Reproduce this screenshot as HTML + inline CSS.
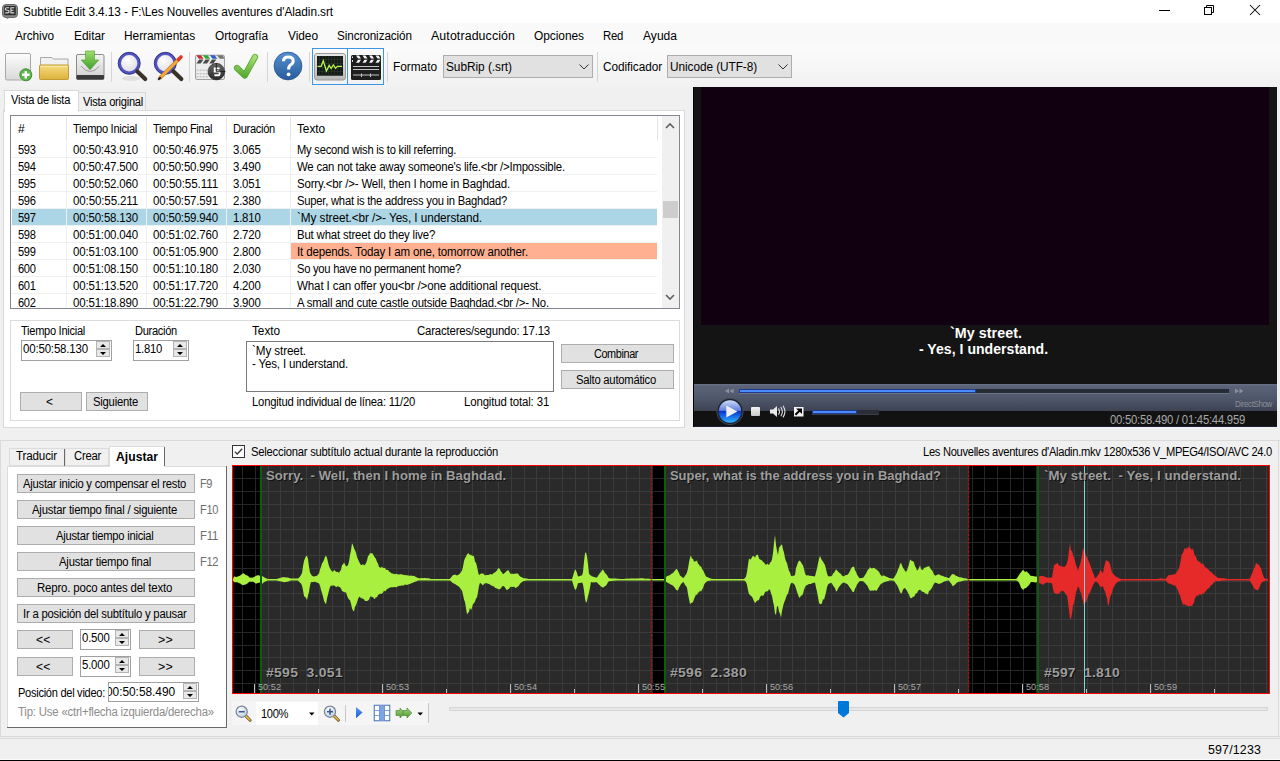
<!DOCTYPE html>
<html><head><meta charset="utf-8"><style>
html,body{margin:0;padding:0;}
body{width:1280px;height:761px;position:relative;overflow:hidden;background:#f0f0f0;font-family:"Liberation Sans",sans-serif;}
.a{position:absolute;}
.t{white-space:pre;}
svg{position:absolute;overflow:visible;}
</style></head><body>
<div class="a" style="left:0px;top:0px;width:1280px;height:23px;background:#ffffff;"></div>
<svg style="left:0px;top:0px" width="22" height="22" viewBox="0 0 22 22"><rect x="2.5" y="4.5" width="15" height="13" rx="3.5" fill="#8a8a8a" stroke="#6a6a6a" stroke-width="1"/><rect x="4.2" y="6" width="11.6" height="9.2" rx="1" fill="#2c2c2c"/><path d="M7 18 L6.5 19.5 L9 18Z" fill="#8a8a8a"/><path d="M9.2 7.8H6.6Q5.4 7.8 5.4 9.1Q5.4 10.3 6.6 10.3H7.9Q9.1 10.3 9.1 11.6Q9.1 12.9 7.9 12.9H5.3" fill="none" stroke="#dedede" stroke-width="1.1"/><path d="M14.3 7.8H10.9V12.9H14.3M10.9 10.3H13.6" fill="none" stroke="#dedede" stroke-width="1.1"/></svg>
<div class="a t" style="left:23.0px;top:6.0px;font-size:12px;line-height:12px;color:#000;letter-spacing:-0.06px;transform:scaleX(0.9830);transform-origin:0 0;">Subtitle Edit 3.4.13 - F:\Les Nouvelles aventures d&#x27;Aladin.srt</div>
<div class="a" style="left:1159px;top:10px;width:11px;height:1px;background:#000;"></div>
<svg style="left:1204px;top:5px" width="10" height="10" viewBox="0 0 10 10"><path d="M2.5 2 V0.5 H9.5 V7.5 H8" fill="none" stroke="#000"/><rect x="0.5" y="2.5" width="7" height="7" fill="none" stroke="#000"/></svg>
<svg style="left:1250px;top:5px" width="10" height="10" viewBox="0 0 10 10"><path d="M0 0 L10 10 M10 0 L0 10" stroke="#000" stroke-width="1.05"/></svg>
<div class="a" style="left:0px;top:23px;width:1280px;height:24px;background:#f9f9f9;"></div>
<div class="a" style="left:1279px;top:47px;width:1px;height:38px;background:#a8a8a8;"></div>
<div class="a t" style="left:15.0px;top:30.0px;font-size:12px;line-height:12px;color:#000;letter-spacing:-0.06px;transform:scaleX(0.9848);transform-origin:0 0;">Archivo</div>
<div class="a t" style="left:74.0px;top:30.0px;font-size:12px;line-height:12px;color:#000;letter-spacing:-0.02px;transform:scaleX(0.9934);transform-origin:0 0;">Editar</div>
<div class="a t" style="left:124.0px;top:30.0px;font-size:12px;line-height:12px;color:#000;letter-spacing:-0.03px;transform:scaleX(0.9914);transform-origin:0 0;">Herramientas</div>
<div class="a t" style="left:215.0px;top:30.0px;font-size:12px;line-height:12px;color:#000;letter-spacing:-0.04px;transform:scaleX(0.9889);transform-origin:0 0;">Ortografía</div>
<div class="a t" style="left:288.0px;top:30.0px;font-size:12px;line-height:12px;color:#000;letter-spacing:-0.04px;transform:scaleX(0.9908);transform-origin:0 0;">Video</div>
<div class="a t" style="left:337.0px;top:30.0px;font-size:12px;line-height:12px;color:#000;letter-spacing:-0.09px;transform:scaleX(0.9766);transform-origin:0 0;">Sincronización</div>
<div class="a t" style="left:431.0px;top:30.0px;font-size:12px;line-height:12px;color:#000;letter-spacing:0.11px;transform:scaleX(1.0298);transform-origin:0 0;">Autotraducción</div>
<div class="a t" style="left:534.0px;top:30.0px;font-size:12px;line-height:12px;color:#000;letter-spacing:-0.03px;transform:scaleX(0.9919);transform-origin:0 0;">Opciones</div>
<div class="a t" style="left:603.0px;top:30.0px;font-size:12px;line-height:12px;color:#000;letter-spacing:-0.28px;transform:scaleX(0.9451);transform-origin:0 0;">Red</div>
<div class="a t" style="left:643.0px;top:30.0px;font-size:12px;line-height:12px;color:#000;letter-spacing:0.02px;transform:scaleX(1.0036);transform-origin:0 0;">Ayuda</div>
<div class="a" style="left:0px;top:47px;width:1280px;height:40px;background:linear-gradient(#fbfbfb,#f1f1f1);"></div>
<div class="a" style="left:111px;top:52px;width:1px;height:30px;background:#d5d5d5;"></div>
<div class="a" style="left:189px;top:52px;width:1px;height:30px;background:#d5d5d5;"></div>
<div class="a" style="left:267px;top:52px;width:1px;height:30px;background:#d5d5d5;"></div>
<div class="a" style="left:309px;top:52px;width:1px;height:30px;background:#d5d5d5;"></div>
<div class="a" style="left:387px;top:52px;width:1px;height:30px;background:#d5d5d5;"></div>
<div class="a" style="left:597px;top:52px;width:1px;height:30px;background:#d5d5d5;"></div>
<div class="a t" style="left:393.0px;top:61.0px;font-size:12px;line-height:12px;color:#000;letter-spacing:-0.04px;transform:scaleX(0.9910);transform-origin:0 0;">Formato</div>
<div class="a" style="left:443px;top:55px;width:150px;height:23px;background:#e1e1e1;border:1px solid #adadad;box-sizing:border-box;"></div>
<div class="a t" style="left:446.0px;top:61.0px;font-size:12px;line-height:12px;color:#000;letter-spacing:-0.04px;transform:scaleX(0.9880);transform-origin:0 0;">SubRip (.srt)</div>
<div class="a t" style="left:603.0px;top:61.0px;font-size:12px;line-height:12px;color:#000;letter-spacing:-0.06px;transform:scaleX(0.9832);transform-origin:0 0;">Codificador</div>
<div class="a" style="left:667px;top:55px;width:125px;height:23px;background:#e1e1e1;border:1px solid #adadad;box-sizing:border-box;"></div>
<div class="a t" style="left:670.0px;top:61.0px;font-size:12px;line-height:12px;color:#000;letter-spacing:-0.06px;transform:scaleX(0.9842);transform-origin:0 0;">Unicode (UTF-8)</div>
<svg style="left:579px;top:64px" width="10" height="6" viewBox="0 0 10 6"><path d="M0.5 0.5 L5 5 L9.5 0.5" fill="none" stroke="#333" stroke-width="1"/></svg>
<svg style="left:778px;top:64px" width="10" height="6" viewBox="0 0 10 6"><path d="M0.5 0.5 L5 5 L9.5 0.5" fill="none" stroke="#333" stroke-width="1"/></svg>
<div class="a" style="left:312px;top:48px;width:36px;height:37px;background:transparent;border:1px solid #3d95e6;box-sizing:border-box;"></div>
<div class="a" style="left:347px;top:48px;width:37px;height:37px;background:transparent;border:1px solid #3d95e6;box-sizing:border-box;"></div>
<div class="a" style="left:3px;top:110px;width:682px;height:318px;background:#ffffff;border:1px solid #d9d9d9;box-sizing:border-box;"></div>
<div class="a" style="left:78px;top:92px;width:68px;height:19px;background:#f0f0f0;border:1px solid #d9d9d9;box-sizing:border-box;"></div>
<div class="a" style="left:4px;top:90px;width:75px;height:22px;background:#ffffff;border:1px solid #d9d9d9;box-sizing:border-box;border-bottom:none;"></div>
<div class="a t" style="left:11.0px;top:94.0px;font-size:12px;line-height:12px;color:#000;letter-spacing:-0.27px;transform:scaleX(0.9221);transform-origin:0 0;">Vista de lista</div>
<div class="a t" style="left:83.0px;top:96.0px;font-size:12px;line-height:12px;color:#000;letter-spacing:-0.26px;transform:scaleX(0.9257);transform-origin:0 0;">Vista original</div>
<div class="a" style="left:10px;top:115px;width:670px;height:194px;background:#ffffff;border:1px solid #828790;box-sizing:border-box;"></div>
<div class="a" style="left:66px;top:117px;width:1px;height:24px;background:#e5e5e5;"></div>
<div class="a" style="left:146px;top:117px;width:1px;height:24px;background:#e5e5e5;"></div>
<div class="a" style="left:226px;top:117px;width:1px;height:24px;background:#e5e5e5;"></div>
<div class="a" style="left:290px;top:117px;width:1px;height:24px;background:#e5e5e5;"></div>
<div class="a" style="left:657px;top:117px;width:1px;height:24px;background:#e5e5e5;"></div>
<div class="a" style="left:11px;top:140px;width:646px;height:1px;background:#ffffff;"></div>
<div class="a t" style="left:18.0px;top:123.0px;font-size:12px;line-height:12px;color:#000;">#</div>
<div class="a t" style="left:73.0px;top:123.0px;font-size:12px;line-height:12px;color:#000;letter-spacing:-0.30px;transform:scaleX(0.9218);transform-origin:0 0;">Tiempo Inicial</div>
<div class="a t" style="left:153.0px;top:123.0px;font-size:12px;line-height:12px;color:#000;letter-spacing:-0.36px;transform:scaleX(0.9136);transform-origin:0 0;">Tiempo Final</div>
<div class="a t" style="left:233.0px;top:123.0px;font-size:12px;line-height:12px;color:#000;letter-spacing:-0.33px;transform:scaleX(0.9247);transform-origin:0 0;">Duración</div>
<div class="a t" style="left:297.0px;top:123.0px;font-size:12px;line-height:12px;color:#000;letter-spacing:-0.05px;transform:scaleX(0.9859);transform-origin:0 0;">Texto</div>
<div class="a" style="left:11px;top:141px;width:651px;height:167px;overflow:hidden">
<div class="a" style="left:0px;top:16px;width:646px;height:1px;background:#f0f0f0"></div>
<div class="a" style="left:55px;top:0px;width:1px;height:16px;background:#f0f0f0"></div>
<div class="a" style="left:135px;top:0px;width:1px;height:16px;background:#f0f0f0"></div>
<div class="a" style="left:215px;top:0px;width:1px;height:16px;background:#f0f0f0"></div>
<div class="a" style="left:279px;top:0px;width:1px;height:16px;background:#f0f0f0"></div>
<div class="a" style="left:0px;top:33px;width:646px;height:1px;background:#f0f0f0"></div>
<div class="a" style="left:55px;top:17px;width:1px;height:16px;background:#f0f0f0"></div>
<div class="a" style="left:135px;top:17px;width:1px;height:16px;background:#f0f0f0"></div>
<div class="a" style="left:215px;top:17px;width:1px;height:16px;background:#f0f0f0"></div>
<div class="a" style="left:279px;top:17px;width:1px;height:16px;background:#f0f0f0"></div>
<div class="a" style="left:0px;top:50px;width:646px;height:1px;background:#f0f0f0"></div>
<div class="a" style="left:55px;top:34px;width:1px;height:16px;background:#f0f0f0"></div>
<div class="a" style="left:135px;top:34px;width:1px;height:16px;background:#f0f0f0"></div>
<div class="a" style="left:215px;top:34px;width:1px;height:16px;background:#f0f0f0"></div>
<div class="a" style="left:279px;top:34px;width:1px;height:16px;background:#f0f0f0"></div>
<div class="a" style="left:0px;top:67px;width:646px;height:1px;background:#f0f0f0"></div>
<div class="a" style="left:55px;top:51px;width:1px;height:16px;background:#f0f0f0"></div>
<div class="a" style="left:135px;top:51px;width:1px;height:16px;background:#f0f0f0"></div>
<div class="a" style="left:215px;top:51px;width:1px;height:16px;background:#f0f0f0"></div>
<div class="a" style="left:279px;top:51px;width:1px;height:16px;background:#f0f0f0"></div>
<div class="a" style="left:1px;top:68px;width:645px;height:16px;background:#acd6e5"></div>
<div class="a" style="left:55px;top:68px;width:1px;height:16px;background:#ffffff"></div>
<div class="a" style="left:0px;top:84px;width:646px;height:1px;background:#f0f0f0"></div>
<div class="a" style="left:55px;top:68px;width:1px;height:16px;background:#f0f0f0"></div>
<div class="a" style="left:135px;top:68px;width:1px;height:16px;background:#f0f0f0"></div>
<div class="a" style="left:215px;top:68px;width:1px;height:16px;background:#f0f0f0"></div>
<div class="a" style="left:279px;top:68px;width:1px;height:16px;background:#f0f0f0"></div>
<div class="a" style="left:0px;top:101px;width:646px;height:1px;background:#f0f0f0"></div>
<div class="a" style="left:55px;top:85px;width:1px;height:16px;background:#f0f0f0"></div>
<div class="a" style="left:135px;top:85px;width:1px;height:16px;background:#f0f0f0"></div>
<div class="a" style="left:215px;top:85px;width:1px;height:16px;background:#f0f0f0"></div>
<div class="a" style="left:279px;top:85px;width:1px;height:16px;background:#f0f0f0"></div>
<div class="a" style="left:280px;top:102px;width:366px;height:16px;background:#ffb091"></div>
<div class="a" style="left:0px;top:118px;width:646px;height:1px;background:#f0f0f0"></div>
<div class="a" style="left:55px;top:102px;width:1px;height:16px;background:#f0f0f0"></div>
<div class="a" style="left:135px;top:102px;width:1px;height:16px;background:#f0f0f0"></div>
<div class="a" style="left:215px;top:102px;width:1px;height:16px;background:#f0f0f0"></div>
<div class="a" style="left:279px;top:102px;width:1px;height:16px;background:#f0f0f0"></div>
<div class="a" style="left:0px;top:135px;width:646px;height:1px;background:#f0f0f0"></div>
<div class="a" style="left:55px;top:119px;width:1px;height:16px;background:#f0f0f0"></div>
<div class="a" style="left:135px;top:119px;width:1px;height:16px;background:#f0f0f0"></div>
<div class="a" style="left:215px;top:119px;width:1px;height:16px;background:#f0f0f0"></div>
<div class="a" style="left:279px;top:119px;width:1px;height:16px;background:#f0f0f0"></div>
<div class="a" style="left:0px;top:152px;width:646px;height:1px;background:#f0f0f0"></div>
<div class="a" style="left:55px;top:136px;width:1px;height:16px;background:#f0f0f0"></div>
<div class="a" style="left:135px;top:136px;width:1px;height:16px;background:#f0f0f0"></div>
<div class="a" style="left:215px;top:136px;width:1px;height:16px;background:#f0f0f0"></div>
<div class="a" style="left:279px;top:136px;width:1px;height:16px;background:#f0f0f0"></div>
<div class="a" style="left:0px;top:169px;width:646px;height:1px;background:#f0f0f0"></div>
<div class="a" style="left:55px;top:153px;width:1px;height:16px;background:#f0f0f0"></div>
<div class="a" style="left:135px;top:153px;width:1px;height:16px;background:#f0f0f0"></div>
<div class="a" style="left:215px;top:153px;width:1px;height:16px;background:#f0f0f0"></div>
<div class="a" style="left:279px;top:153px;width:1px;height:16px;background:#f0f0f0"></div>
</div>
<div class="a t" style="left:18.0px;top:144.0px;font-size:12px;line-height:12px;color:#000;letter-spacing:-0.36px;transform:scaleX(0.9246);transform-origin:0 0;">593</div>
<div class="a t" style="left:73.0px;top:144.0px;font-size:12px;line-height:12px;color:#000;letter-spacing:-0.18px;transform:scaleX(0.9569);transform-origin:0 0;">00:50:43.910</div>
<div class="a t" style="left:153.0px;top:144.0px;font-size:12px;line-height:12px;color:#000;letter-spacing:-0.18px;transform:scaleX(0.9569);transform-origin:0 0;">00:50:46.975</div>
<div class="a t" style="left:233.0px;top:144.0px;font-size:12px;line-height:12px;color:#000;letter-spacing:-0.21px;transform:scaleX(0.9497);transform-origin:0 0;">3.065</div>
<div class="a t" style="left:297.0px;top:144.0px;font-size:12px;line-height:12px;color:#000;letter-spacing:-0.24px;transform:scaleX(0.9318);transform-origin:0 0;">My second wish is to kill referring.</div>
<div class="a t" style="left:18.0px;top:161.0px;font-size:12px;line-height:12px;color:#000;letter-spacing:-0.36px;transform:scaleX(0.9246);transform-origin:0 0;">594</div>
<div class="a t" style="left:73.0px;top:161.0px;font-size:12px;line-height:12px;color:#000;letter-spacing:-0.18px;transform:scaleX(0.9569);transform-origin:0 0;">00:50:47.500</div>
<div class="a t" style="left:153.0px;top:161.0px;font-size:12px;line-height:12px;color:#000;letter-spacing:-0.18px;transform:scaleX(0.9569);transform-origin:0 0;">00:50:50.990</div>
<div class="a t" style="left:233.0px;top:161.0px;font-size:12px;line-height:12px;color:#000;letter-spacing:-0.21px;transform:scaleX(0.9497);transform-origin:0 0;">3.490</div>
<div class="a t" style="left:297.0px;top:161.0px;font-size:12px;line-height:12px;color:#000;letter-spacing:-0.20px;transform:scaleX(0.9491);transform-origin:0 0;">We can not take away someone&#x27;s life.&lt;br /&gt;Impossible.</div>
<div class="a t" style="left:18.0px;top:178.0px;font-size:12px;line-height:12px;color:#000;letter-spacing:-0.36px;transform:scaleX(0.9246);transform-origin:0 0;">595</div>
<div class="a t" style="left:73.0px;top:178.0px;font-size:12px;line-height:12px;color:#000;letter-spacing:-0.18px;transform:scaleX(0.9569);transform-origin:0 0;">00:50:52.060</div>
<div class="a t" style="left:153.0px;top:178.0px;font-size:12px;line-height:12px;color:#000;letter-spacing:-0.11px;transform:scaleX(0.9714);transform-origin:0 0;">00:50:55.111</div>
<div class="a t" style="left:233.0px;top:178.0px;font-size:12px;line-height:12px;color:#000;letter-spacing:-0.21px;transform:scaleX(0.9497);transform-origin:0 0;">3.051</div>
<div class="a t" style="left:297.0px;top:178.0px;font-size:12px;line-height:12px;color:#000;letter-spacing:-0.17px;transform:scaleX(0.9550);transform-origin:0 0;">Sorry.&lt;br /&gt;- Well, then I home in Baghdad.</div>
<div class="a t" style="left:18.0px;top:195.0px;font-size:12px;line-height:12px;color:#000;letter-spacing:-0.36px;transform:scaleX(0.9246);transform-origin:0 0;">596</div>
<div class="a t" style="left:73.0px;top:195.0px;font-size:12px;line-height:12px;color:#000;letter-spacing:-0.14px;transform:scaleX(0.9641);transform-origin:0 0;">00:50:55.211</div>
<div class="a t" style="left:153.0px;top:195.0px;font-size:12px;line-height:12px;color:#000;letter-spacing:-0.18px;transform:scaleX(0.9569);transform-origin:0 0;">00:50:57.591</div>
<div class="a t" style="left:233.0px;top:195.0px;font-size:12px;line-height:12px;color:#000;letter-spacing:-0.21px;transform:scaleX(0.9497);transform-origin:0 0;">2.380</div>
<div class="a t" style="left:297.0px;top:195.0px;font-size:12px;line-height:12px;color:#000;letter-spacing:-0.25px;transform:scaleX(0.9367);transform-origin:0 0;">Super, what is the address you in Baghdad?</div>
<div class="a t" style="left:18.0px;top:212.0px;font-size:12px;line-height:12px;color:#000;letter-spacing:-0.36px;transform:scaleX(0.9246);transform-origin:0 0;">597</div>
<div class="a t" style="left:73.0px;top:212.0px;font-size:12px;line-height:12px;color:#000;letter-spacing:-0.18px;transform:scaleX(0.9569);transform-origin:0 0;">00:50:58.130</div>
<div class="a t" style="left:153.0px;top:212.0px;font-size:12px;line-height:12px;color:#000;letter-spacing:-0.18px;transform:scaleX(0.9569);transform-origin:0 0;">00:50:59.940</div>
<div class="a t" style="left:233.0px;top:212.0px;font-size:12px;line-height:12px;color:#000;letter-spacing:-0.21px;transform:scaleX(0.9497);transform-origin:0 0;">1.810</div>
<div class="a t" style="left:297.0px;top:212.0px;font-size:12px;line-height:12px;color:#000;letter-spacing:-0.07px;transform:scaleX(0.9800);transform-origin:0 0;">`My street.&lt;br /&gt;- Yes, I understand.</div>
<div class="a t" style="left:18.0px;top:229.0px;font-size:12px;line-height:12px;color:#000;letter-spacing:-0.36px;transform:scaleX(0.9246);transform-origin:0 0;">598</div>
<div class="a t" style="left:73.0px;top:229.0px;font-size:12px;line-height:12px;color:#000;letter-spacing:-0.18px;transform:scaleX(0.9569);transform-origin:0 0;">00:51:00.040</div>
<div class="a t" style="left:153.0px;top:229.0px;font-size:12px;line-height:12px;color:#000;letter-spacing:-0.18px;transform:scaleX(0.9569);transform-origin:0 0;">00:51:02.760</div>
<div class="a t" style="left:233.0px;top:229.0px;font-size:12px;line-height:12px;color:#000;letter-spacing:-0.21px;transform:scaleX(0.9497);transform-origin:0 0;">2.720</div>
<div class="a t" style="left:297.0px;top:229.0px;font-size:12px;line-height:12px;color:#000;letter-spacing:-0.18px;transform:scaleX(0.9495);transform-origin:0 0;">But what street do they live?</div>
<div class="a t" style="left:18.0px;top:246.0px;font-size:12px;line-height:12px;color:#000;letter-spacing:-0.36px;transform:scaleX(0.9246);transform-origin:0 0;">599</div>
<div class="a t" style="left:73.0px;top:246.0px;font-size:12px;line-height:12px;color:#000;letter-spacing:-0.18px;transform:scaleX(0.9569);transform-origin:0 0;">00:51:03.100</div>
<div class="a t" style="left:153.0px;top:246.0px;font-size:12px;line-height:12px;color:#000;letter-spacing:-0.18px;transform:scaleX(0.9569);transform-origin:0 0;">00:51:05.900</div>
<div class="a t" style="left:233.0px;top:246.0px;font-size:12px;line-height:12px;color:#000;letter-spacing:-0.21px;transform:scaleX(0.9497);transform-origin:0 0;">2.800</div>
<div class="a t" style="left:297.0px;top:246.0px;font-size:12px;line-height:12px;color:#000;letter-spacing:-0.16px;transform:scaleX(0.9593);transform-origin:0 0;">It depends. Today I am one, tomorrow another.</div>
<div class="a t" style="left:18.0px;top:263.0px;font-size:12px;line-height:12px;color:#000;letter-spacing:-0.36px;transform:scaleX(0.9246);transform-origin:0 0;">600</div>
<div class="a t" style="left:73.0px;top:263.0px;font-size:12px;line-height:12px;color:#000;letter-spacing:-0.18px;transform:scaleX(0.9569);transform-origin:0 0;">00:51:08.150</div>
<div class="a t" style="left:153.0px;top:263.0px;font-size:12px;line-height:12px;color:#000;letter-spacing:-0.18px;transform:scaleX(0.9569);transform-origin:0 0;">00:51:10.180</div>
<div class="a t" style="left:233.0px;top:263.0px;font-size:12px;line-height:12px;color:#000;letter-spacing:-0.21px;transform:scaleX(0.9497);transform-origin:0 0;">2.030</div>
<div class="a t" style="left:297.0px;top:263.0px;font-size:12px;line-height:12px;color:#000;letter-spacing:-0.29px;transform:scaleX(0.9346);transform-origin:0 0;">So you have no permanent home?</div>
<div class="a t" style="left:18.0px;top:280.0px;font-size:12px;line-height:12px;color:#000;letter-spacing:-0.36px;transform:scaleX(0.9246);transform-origin:0 0;">601</div>
<div class="a t" style="left:73.0px;top:280.0px;font-size:12px;line-height:12px;color:#000;letter-spacing:-0.18px;transform:scaleX(0.9569);transform-origin:0 0;">00:51:13.520</div>
<div class="a t" style="left:153.0px;top:280.0px;font-size:12px;line-height:12px;color:#000;letter-spacing:-0.18px;transform:scaleX(0.9569);transform-origin:0 0;">00:51:17.720</div>
<div class="a t" style="left:233.0px;top:280.0px;font-size:12px;line-height:12px;color:#000;letter-spacing:-0.21px;transform:scaleX(0.9497);transform-origin:0 0;">4.200</div>
<div class="a t" style="left:297.0px;top:280.0px;font-size:12px;line-height:12px;color:#000;letter-spacing:-0.13px;transform:scaleX(0.9634);transform-origin:0 0;">What I can offer you&lt;br /&gt;one additional request.</div>
<div class="a t" style="left:18.0px;top:297.0px;font-size:12px;line-height:12px;color:#000;letter-spacing:-0.36px;transform:scaleX(0.9246);transform-origin:0 0;">602</div>
<div class="a t" style="left:73.0px;top:297.0px;font-size:12px;line-height:12px;color:#000;letter-spacing:-0.18px;transform:scaleX(0.9569);transform-origin:0 0;">00:51:18.890</div>
<div class="a t" style="left:153.0px;top:297.0px;font-size:12px;line-height:12px;color:#000;letter-spacing:-0.18px;transform:scaleX(0.9569);transform-origin:0 0;">00:51:22.790</div>
<div class="a t" style="left:233.0px;top:297.0px;font-size:12px;line-height:12px;color:#000;letter-spacing:-0.21px;transform:scaleX(0.9497);transform-origin:0 0;">3.900</div>
<div class="a t" style="left:297.0px;top:297.0px;font-size:12px;line-height:12px;color:#000;letter-spacing:-0.21px;transform:scaleX(0.9463);transform-origin:0 0;">A small and cute castle outside Baghdad.&lt;br /&gt;- No.</div>
<div class="a" style="left:10px;top:308px;width:670px;height:1px;background:#828790;"></div>
<div class="a" style="left:11px;top:309px;width:668px;height:11px;background:#ffffff;"></div>
<div class="a" style="left:662px;top:116px;width:17px;height:192px;background:#f0f0f0;"></div>
<div class="a" style="left:663px;top:201px;width:15px;height:17px;background:#cdcdcd;"></div>
<svg style="left:665px;top:123px" width="10" height="6" viewBox="0 0 10 6"><path d="M1 5 L5 1 L9 5" fill="none" stroke="#606060" stroke-width="1.6"/></svg>
<svg style="left:665px;top:294px" width="10" height="6" viewBox="0 0 10 6"><path d="M1 1 L5 5 L9 1" fill="none" stroke="#606060" stroke-width="1.6"/></svg>
<div class="a" style="left:10px;top:320px;width:670px;height:101px;background:#ffffff;border:1px solid #dcdcdc;box-sizing:border-box;"></div>
<div class="a t" style="left:21.0px;top:325.0px;font-size:12px;line-height:12px;color:#000;letter-spacing:-0.30px;transform:scaleX(0.9218);transform-origin:0 0;">Tiempo Inicial</div>
<div class="a t" style="left:135.0px;top:325.0px;font-size:12px;line-height:12px;color:#000;letter-spacing:-0.33px;transform:scaleX(0.9247);transform-origin:0 0;">Duración</div>
<div class="a" style="left:21px;top:340px;width:91px;height:21px;background:#ffffff;border:1px solid #a0a0a0;box-sizing:border-box;"></div>
<div class="a t" style="left:23.0px;top:343.0px;font-size:12px;line-height:12px;color:#000;letter-spacing:-0.18px;transform:scaleX(0.9569);transform-origin:0 0;">00:50:58.130</div>
<div class="a" style="left:96px;top:341px;width:14px;height:8px;background:#e8e8e8;border:1px solid #b4b4b4;box-sizing:border-box;"></div>
<div class="a" style="left:96px;top:349px;width:14px;height:8px;background:#e8e8e8;border:1px solid #b4b4b4;box-sizing:border-box;"></div>
<svg style="left:99px;top:343px" width="8" height="13" viewBox="0 0 8 13"><path d="M1 4 L4 1 L7 4Z M1 9 L4 12 L7 9Z" fill="#000"/></svg>
<div class="a" style="left:133px;top:340px;width:56px;height:21px;background:#ffffff;border:1px solid #a0a0a0;box-sizing:border-box;"></div>
<div class="a t" style="left:135.0px;top:343.0px;font-size:12px;line-height:12px;color:#000;letter-spacing:-0.26px;transform:scaleX(0.9397);transform-origin:0 0;">1.810</div>
<div class="a" style="left:173px;top:341px;width:14px;height:8px;background:#e8e8e8;border:1px solid #b4b4b4;box-sizing:border-box;"></div>
<div class="a" style="left:173px;top:349px;width:14px;height:8px;background:#e8e8e8;border:1px solid #b4b4b4;box-sizing:border-box;"></div>
<svg style="left:176px;top:343px" width="8" height="13" viewBox="0 0 8 13"><path d="M1 4 L4 1 L7 4Z M1 9 L4 12 L7 9Z" fill="#000"/></svg>
<div class="a" style="left:20px;top:392px;width:62px;height:19px;background:#e1e1e1;border:1px solid #adadad;box-sizing:border-box;"></div>
<div class="a t" style="left:46.0px;top:396.0px;font-size:12px;line-height:12px;color:#000;">&lt;</div>
<div class="a" style="left:86px;top:392px;width:62px;height:19px;background:#e1e1e1;border:1px solid #adadad;box-sizing:border-box;"></div>
<div class="a t" style="left:93.0px;top:396.0px;font-size:12px;line-height:12px;color:#000;letter-spacing:-0.24px;transform:scaleX(0.9397);transform-origin:0 0;">Siguiente</div>
<div class="a t" style="left:252.0px;top:325.0px;font-size:12px;line-height:12px;color:#000;letter-spacing:-0.05px;transform:scaleX(0.9859);transform-origin:0 0;">Texto</div>
<div class="a t" style="left:417.0px;top:325.0px;font-size:12px;line-height:12px;color:#000;letter-spacing:-0.20px;transform:scaleX(0.9514);transform-origin:0 0;">Caracteres/segundo: 17.13</div>
<div class="a" style="left:246px;top:341px;width:308px;height:51px;background:#ffffff;border:1px solid #7a7a7a;box-sizing:border-box;"></div>
<div class="a t" style="left:252.0px;top:345.0px;font-size:12px;line-height:12px;color:#000;letter-spacing:-0.10px;transform:scaleX(0.9719);transform-origin:0 0;">`My street.</div>
<div class="a t" style="left:252.0px;top:358.0px;font-size:12px;line-height:12px;color:#000;letter-spacing:-0.15px;transform:scaleX(0.9573);transform-origin:0 0;">- Yes, I understand.</div>
<div class="a t" style="left:252.0px;top:396.0px;font-size:12px;line-height:12px;color:#000;letter-spacing:-0.22px;transform:scaleX(0.9397);transform-origin:0 0;">Longitud individual de línea: 11/20</div>
<div class="a t" style="left:464.0px;top:396.0px;font-size:12px;line-height:12px;color:#000;letter-spacing:-0.16px;transform:scaleX(0.9542);transform-origin:0 0;">Longitud total: 31</div>
<div class="a" style="left:561px;top:344px;width:113px;height:19px;background:#e1e1e1;border:1px solid #adadad;box-sizing:border-box;"></div>
<div class="a t" style="left:594.0px;top:348.0px;font-size:12px;line-height:12px;color:#000;letter-spacing:-0.44px;transform:scaleX(0.9074);transform-origin:0 0;">Combinar</div>
<div class="a" style="left:561px;top:370px;width:113px;height:19px;background:#e1e1e1;border:1px solid #adadad;box-sizing:border-box;"></div>
<div class="a t" style="left:576.0px;top:374.0px;font-size:12px;line-height:12px;color:#000;letter-spacing:-0.25px;transform:scaleX(0.9372);transform-origin:0 0;">Salto automático</div>
<div class="a" style="left:693px;top:87px;width:584px;height:340px;background:#141414;"></div>
<div class="a" style="left:693px;top:87px;width:1px;height:340px;background:#000000;"></div>
<div class="a" style="left:701px;top:87px;width:568px;height:238px;background:#110010;"></div>
<div class="a t" style="left:949.5px;top:326.0px;font-size:14px;line-height:14px;color:#ffffff;font-weight:700;letter-spacing:0.07px;transform:scaleX(1.0173);transform-origin:0 0;">`My street.</div>
<div class="a t" style="left:919.0px;top:342.0px;font-size:14px;line-height:14px;color:#ffffff;font-weight:700;letter-spacing:0.02px;transform:scaleX(1.0043);transform-origin:0 0;">- Yes, I understand.</div>
<div class="a" style="left:694px;top:384px;width:583px;height:27px;background:linear-gradient(#6b7389 0px,#5b6378 2px,#4f576b 14px,#3d4352 27px);"></div>
<div class="a" style="left:694px;top:411px;width:583px;height:16px;background:#121212;"></div>
<div class="a" style="left:694px;top:426px;width:583px;height:1px;background:#1b2236;"></div>
<div class="a" style="left:739px;top:389px;width:490px;height:4px;background:#272b35;"></div>
<div class="a" style="left:739px;top:393px;width:490px;height:1px;background:#6b7386;"></div>
<div class="a" style="left:739px;top:389px;width:237px;height:4px;background:#1f3a8a;"></div>
<div class="a" style="left:740px;top:390px;width:235px;height:2px;background:#4a8cff;"></div>
<div class="a t" style="left:1110.0px;top:414.0px;font-size:12px;line-height:12px;color:#a8a8a8;letter-spacing:-0.24px;transform:scaleX(0.9398);transform-origin:0 0;">00:50:58.490 / 01:45:44.959</div>
<div class="a t" style="left:1235.0px;top:400.0px;font-size:9px;line-height:9px;color:#8a8f9a;letter-spacing:-0.41px;transform:scaleX(0.8826);transform-origin:0 0;">DirectShow</div>
<div class="a" style="left:812px;top:410px;width:67px;height:4px;background:#2a2d36;"></div>
<div class="a" style="left:812px;top:414px;width:67px;height:1px;background:#3a3e48;"></div>
<div class="a" style="left:812px;top:410px;width:45px;height:4px;background:#1f3a8a;"></div>
<div class="a" style="left:813px;top:411px;width:43px;height:2px;background:#4a8cff;"></div>
<div class="a" style="left:0px;top:440px;width:1280px;height:1px;background:#dadada;"></div>
<div class="a" style="left:0px;top:440px;width:1px;height:297px;background:#dadada;"></div>
<div class="a" style="left:1278px;top:440px;width:1px;height:297px;background:#dadada;"></div>
<div class="a" style="left:0px;top:736px;width:1280px;height:1px;background:#d9d9d9;"></div>
<div class="a" style="left:0px;top:738px;width:1280px;height:1px;background:#d9d9d9;"></div>
<div class="a" style="left:232px;top:445px;width:13px;height:13px;background:#ffffff;border:1px solid #333333;box-sizing:border-box;"></div>
<svg style="left:234px;top:447px" width="9" height="9" viewBox="0 0 9 9"><path d="M0.8 4.6 L3.2 7 L8.2 1.8" fill="none" stroke="#333" stroke-width="1.3"/></svg>
<div class="a t" style="left:251.0px;top:446.0px;font-size:12px;line-height:12px;color:#000;letter-spacing:-0.24px;transform:scaleX(0.9367);transform-origin:0 0;">Seleccionar subtítulo actual durante la reproducción</div>
<div class="a t" style="left:923.0px;top:446.0px;font-size:12px;line-height:12px;color:#000;letter-spacing:-0.31px;transform:scaleX(0.9286);transform-origin:0 0;">Les Nouvelles aventures d&#x27;Aladin.mkv 1280x536 V_MPEG4/ISO/AVC 24.0</div>
<div class="a" style="left:7px;top:466px;width:220px;height:262px;background:#ffffff;border:1px solid #dcdcdc;box-sizing:border-box;"></div>
<div class="a" style="left:7px;top:727px;width:220px;height:1px;background:#696969;"></div>
<div class="a" style="left:226px;top:466px;width:1px;height:262px;background:#696969;"></div>
<div class="a" style="left:9px;top:448px;width:56px;height:18px;background:#f0f0f0;border:1px solid #dcdcdc;box-sizing:border-box;"></div>
<div class="a" style="left:64px;top:449px;width:1px;height:17px;background:#696969;"></div>
<div class="a" style="left:65px;top:448px;width:44px;height:18px;background:#f0f0f0;border:1px solid #dcdcdc;box-sizing:border-box;"></div>
<div class="a" style="left:109px;top:446px;width:56px;height:21px;background:#ffffff;border:1px solid #dcdcdc;box-sizing:border-box;border-bottom:none;"></div>
<div class="a" style="left:164px;top:447px;width:1px;height:19px;background:#696969;"></div>
<div class="a t" style="left:16.0px;top:450.0px;font-size:12px;line-height:12px;color:#000;letter-spacing:-0.13px;transform:scaleX(0.9645);transform-origin:0 0;">Traducir</div>
<div class="a t" style="left:74.0px;top:450.0px;font-size:12px;line-height:12px;color:#000;letter-spacing:-0.26px;transform:scaleX(0.9397);transform-origin:0 0;">Crear</div>
<div class="a t" style="left:116.0px;top:451.0px;font-size:12px;line-height:12px;color:#000;font-weight:700;letter-spacing:0.04px;transform:scaleX(1.0095);transform-origin:0 0;">Ajustar</div>
<div class="a" style="left:17px;top:474px;width:178px;height:19px;background:#e1e1e1;border:1px solid #adadad;box-sizing:border-box;"></div>
<div class="a t" style="left:23.0px;top:478.0px;font-size:12px;line-height:12px;color:#000;letter-spacing:-0.24px;transform:scaleX(0.9352);transform-origin:0 0;">Ajustar inicio y compensar el resto</div>
<div class="a t" style="left:200.0px;top:478.0px;font-size:12px;line-height:12px;color:#6d6d6d;letter-spacing:-0.44px;transform:scaleX(0.9143);transform-origin:0 0;">F9</div>
<div class="a" style="left:17px;top:500px;width:178px;height:19px;background:#e1e1e1;border:1px solid #adadad;box-sizing:border-box;"></div>
<div class="a t" style="left:32.0px;top:504.0px;font-size:12px;line-height:12px;color:#000;letter-spacing:-0.20px;transform:scaleX(0.9436);transform-origin:0 0;">Ajustar tiempo final / siguiente</div>
<div class="a t" style="left:200.0px;top:504.0px;font-size:12px;line-height:12px;color:#6d6d6d;letter-spacing:-0.39px;transform:scaleX(0.9224);transform-origin:0 0;">F10</div>
<div class="a" style="left:17px;top:526px;width:178px;height:19px;background:#e1e1e1;border:1px solid #adadad;box-sizing:border-box;"></div>
<div class="a t" style="left:55.8px;top:530.0px;font-size:12px;line-height:12px;color:#000;letter-spacing:-0.24px;transform:scaleX(0.9316);transform-origin:0 0;">Ajustar tiempo inicial</div>
<div class="a t" style="left:200.0px;top:530.0px;font-size:12px;line-height:12px;color:#6d6d6d;letter-spacing:-0.25px;transform:scaleX(0.9460);transform-origin:0 0;">F11</div>
<div class="a" style="left:17px;top:552px;width:178px;height:19px;background:#e1e1e1;border:1px solid #adadad;box-sizing:border-box;"></div>
<div class="a t" style="left:58.5px;top:556.0px;font-size:12px;line-height:12px;color:#000;letter-spacing:-0.21px;transform:scaleX(0.9410);transform-origin:0 0;">Ajustar tiempo final</div>
<div class="a t" style="left:200.0px;top:556.0px;font-size:12px;line-height:12px;color:#6d6d6d;letter-spacing:-0.39px;transform:scaleX(0.9224);transform-origin:0 0;">F12</div>
<div class="a" style="left:17px;top:578px;width:178px;height:19px;background:#e1e1e1;border:1px solid #adadad;box-sizing:border-box;"></div>
<div class="a t" style="left:37.0px;top:582.0px;font-size:12px;line-height:12px;color:#000;letter-spacing:-0.18px;transform:scaleX(0.9521);transform-origin:0 0;">Repro. poco antes del texto</div>
<div class="a" style="left:17px;top:604px;width:178px;height:19px;background:#e1e1e1;border:1px solid #adadad;box-sizing:border-box;"></div>
<div class="a t" style="left:22.8px;top:608.0px;font-size:12px;line-height:12px;color:#000;letter-spacing:-0.22px;transform:scaleX(0.9389);transform-origin:0 0;">Ir a posición del subtítulo y pausar</div>
<div class="a" style="left:17px;top:630px;width:56px;height:19px;background:#e1e1e1;border:1px solid #adadad;box-sizing:border-box;"></div>
<div class="a t" style="left:36.2px;top:634.0px;font-size:12px;line-height:12px;color:#000;letter-spacing:0.09px;transform:scaleX(1.0200);transform-origin:0 0;">&lt;&lt;</div>
<div class="a" style="left:139px;top:630px;width:56px;height:19px;background:#e1e1e1;border:1px solid #adadad;box-sizing:border-box;"></div>
<div class="a t" style="left:158.0px;top:634.0px;font-size:12px;line-height:12px;color:#000;letter-spacing:0.19px;transform:scaleX(1.0414);transform-origin:0 0;">&gt;&gt;</div>
<div class="a" style="left:80px;top:629px;width:51px;height:21px;background:#ffffff;border:1px solid #a0a0a0;box-sizing:border-box;"></div>
<div class="a t" style="left:82.0px;top:632.0px;font-size:12px;line-height:12px;color:#000;letter-spacing:-0.21px;transform:scaleX(0.9497);transform-origin:0 0;">0.500</div>
<div class="a" style="left:115px;top:630px;width:14px;height:8px;background:#e8e8e8;border:1px solid #b4b4b4;box-sizing:border-box;"></div>
<div class="a" style="left:115px;top:638px;width:14px;height:8px;background:#e8e8e8;border:1px solid #b4b4b4;box-sizing:border-box;"></div>
<svg style="left:118px;top:632px" width="8" height="13" viewBox="0 0 8 13"><path d="M1 4 L4 1 L7 4Z M1 9 L4 12 L7 9Z" fill="#000"/></svg>
<div class="a" style="left:17px;top:657px;width:56px;height:19px;background:#e1e1e1;border:1px solid #adadad;box-sizing:border-box;"></div>
<div class="a t" style="left:36.2px;top:661.0px;font-size:12px;line-height:12px;color:#000;letter-spacing:0.09px;transform:scaleX(1.0200);transform-origin:0 0;">&lt;&lt;</div>
<div class="a" style="left:139px;top:657px;width:56px;height:19px;background:#e1e1e1;border:1px solid #adadad;box-sizing:border-box;"></div>
<div class="a t" style="left:158.0px;top:661.0px;font-size:12px;line-height:12px;color:#000;letter-spacing:0.19px;transform:scaleX(1.0414);transform-origin:0 0;">&gt;&gt;</div>
<div class="a" style="left:80px;top:656px;width:51px;height:21px;background:#ffffff;border:1px solid #a0a0a0;box-sizing:border-box;"></div>
<div class="a t" style="left:82.0px;top:659.0px;font-size:12px;line-height:12px;color:#000;letter-spacing:-0.21px;transform:scaleX(0.9497);transform-origin:0 0;">5.000</div>
<div class="a" style="left:115px;top:657px;width:14px;height:8px;background:#e8e8e8;border:1px solid #b4b4b4;box-sizing:border-box;"></div>
<div class="a" style="left:115px;top:665px;width:14px;height:8px;background:#e8e8e8;border:1px solid #b4b4b4;box-sizing:border-box;"></div>
<svg style="left:118px;top:659px" width="8" height="13" viewBox="0 0 8 13"><path d="M1 4 L4 1 L7 4Z M1 9 L4 12 L7 9Z" fill="#000"/></svg>
<div class="a t" style="left:18.0px;top:687.0px;font-size:12px;line-height:12px;color:#000;letter-spacing:-0.30px;transform:scaleX(0.9218);transform-origin:0 0;">Posición del video:</div>
<div class="a" style="left:108px;top:682px;width:91px;height:20px;background:#ffffff;border:1px solid #a0a0a0;box-sizing:border-box;"></div>
<div class="a t" style="left:110.0px;top:685.0px;font-size:12px;line-height:12px;color:#000;"></div>
<div class="a" style="left:183px;top:683px;width:14px;height:8px;background:#e8e8e8;border:1px solid #b4b4b4;box-sizing:border-box;"></div>
<div class="a" style="left:183px;top:691px;width:14px;height:8px;background:#e8e8e8;border:1px solid #b4b4b4;box-sizing:border-box;"></div>
<svg style="left:186px;top:685px" width="8" height="13" viewBox="0 0 8 13"><path d="M1 4 L4 1 L7 4Z M1 9 L4 12 L7 9Z" fill="#000"/></svg>
<div class="a" style="left:109px;top:683px;width:70px;height:18px;overflow:hidden">
<div class="a t" style="left:-3.5px;top:3.0px;font-size:12px;line-height:12px;color:#000;letter-spacing:-0.03px;transform:scaleX(0.9912);transform-origin:0 0;">00:50:58.490</div>
</div>
<div class="a t" style="left:18.0px;top:706.0px;font-size:12px;line-height:12px;color:#8c8c8c;letter-spacing:-0.20px;transform:scaleX(0.9479);transform-origin:0 0;">Tip: Use «ctrl+flecha izquierda/derecha»</div>
<div class="a" style="left:232px;top:701px;width:197px;height:24px;background:#f5f5f5;"></div>
<div class="a" style="left:256px;top:702px;width:62px;height:23px;background:#ffffff;"></div>
<div class="a t" style="left:261.0px;top:708.0px;font-size:12px;line-height:12px;color:#000;letter-spacing:-0.40px;transform:scaleX(0.9279);transform-origin:0 0;">100%</div>
<div class="a" style="left:345px;top:705px;width:1px;height:17px;background:#c8c8c8;"></div>
<div class="a" style="left:428px;top:703px;width:1px;height:20px;background:#c8c8c8;"></div>
<div class="a" style="left:449px;top:707px;width:819px;height:4px;background:#e6e6e6;border:1px solid #d6d6d6;box-sizing:border-box;"></div>
<svg style="left:838px;top:701px" width="11" height="17" viewBox="0 0 11 17"><path d="M0 1 Q0 0 1 0 H10 Q11 0 11 1 V12 L5.5 16.5 L0 12Z" fill="#0078d7"/></svg>
<div class="a t" style="left:1208.0px;top:744.0px;font-size:12px;line-height:12px;color:#000;letter-spacing:0.14px;transform:scaleX(1.0356);transform-origin:0 0;">597/1233</div>
<div class="a" style="left:0px;top:759px;width:1280px;height:1px;background:#fafafa;"></div>
<div class="a" style="left:0px;top:760px;width:1280px;height:1px;background:#000000;"></div>
<svg style="left:232px;top:465px" width="1038" height="229" viewBox="232 465 1038 229"><rect x="233" y="466" width="1036" height="227" fill="#000"/><rect x="261" y="466" width="391" height="227" fill="#2a2a2a"/><rect x="664" y="466" width="305" height="227" fill="#2a2a2a"/><rect x="1037" y="466" width="232" height="227" fill="#2a2a2a"/><path d="M242.5 466V693 M255.5 466V693 M268.5 466V693 M280.5 466V693 M293.5 466V693 M306.5 466V693 M319.5 466V693 M332.5 466V693 M344.5 466V693 M357.5 466V693 M370.5 466V693 M383.5 466V693 M396.5 466V693 M408.5 466V693 M421.5 466V693 M434.5 466V693 M447.5 466V693 M460.5 466V693 M472.5 466V693 M485.5 466V693 M498.5 466V693 M511.5 466V693 M524.5 466V693 M536.5 466V693 M549.5 466V693 M562.5 466V693 M575.5 466V693 M588.5 466V693 M600.5 466V693 M613.5 466V693 M626.5 466V693 M639.5 466V693 M652.5 466V693 M664.5 466V693 M677.5 466V693 M690.5 466V693 M703.5 466V693 M716.5 466V693 M728.5 466V693 M741.5 466V693 M754.5 466V693 M767.5 466V693 M780.5 466V693 M792.5 466V693 M805.5 466V693 M818.5 466V693 M831.5 466V693 M844.5 466V693 M856.5 466V693 M869.5 466V693 M882.5 466V693 M895.5 466V693 M908.5 466V693 M920.5 466V693 M933.5 466V693 M946.5 466V693 M959.5 466V693 M972.5 466V693 M984.5 466V693 M997.5 466V693 M1010.5 466V693 M1023.5 466V693 M1036.5 466V693 M1048.5 466V693 M1061.5 466V693 M1074.5 466V693 M1087.5 466V693 M1100.5 466V693 M1112.5 466V693 M1125.5 466V693 M1138.5 466V693 M1151.5 466V693 M1164.5 466V693 M1176.5 466V693 M1189.5 466V693 M1202.5 466V693 M1215.5 466V693 M1228.5 466V693 M1240.5 466V693 M1253.5 466V693 M1266.5 466V693 M233 478.5H1269 M233 491.5H1269 M233 504.5H1269 M233 517.5H1269 M233 529.5H1269 M233 542.5H1269 M233 555.5H1269 M233 568.5H1269 M233 581.5H1269 M233 593.5H1269 M233 606.5H1269 M233 619.5H1269 M233 632.5H1269 M233 645.5H1269 M233 657.5H1269 M233 670.5H1269 M233 683.5H1269" stroke="#3b3b3b" stroke-width="1"/><rect x="233" y="466" width="28" height="227" fill="#000" opacity="0.35"/><rect x="652" y="466" width="12" height="227" fill="#000" opacity="0.35"/><rect x="969" y="466" width="68" height="227" fill="#000" opacity="0.35"/><polygon points="233.0,578.9 234.0,576.4 235.0,576.6 236.0,576.9 237.0,576.8 238.0,576.4 239.0,575.9 240.0,575.7 241.0,574.8 242.0,574.2 243.0,573.2 244.0,573.6 245.0,574.6 246.0,574.9 247.0,575.4 248.0,575.8 249.0,576.9 250.0,577.8 251.0,577.6 252.0,577.7 253.0,577.6 254.0,577.0 255.0,576.5 256.0,575.8 257.0,575.5 258.0,575.1 259.0,575.4 260.0,575.8 261.0,576.1 262.0,576.0 263.0,576.5 264.0,577.2 265.0,577.8 266.0,578.2 267.0,578.7 268.0,578.9 269.0,578.9 270.0,578.9 271.0,578.9 272.0,578.9 273.0,578.9 274.0,578.9 275.0,578.9 276.0,578.9 277.0,578.9 278.0,578.6 279.0,578.2 280.0,578.0 281.0,577.7 282.0,577.2 283.0,577.2 284.0,577.3 285.0,577.3 286.0,577.6 287.0,577.6 288.0,577.6 289.0,578.0 290.0,578.2 291.0,578.4 292.0,578.5 293.0,578.6 294.0,578.6 295.0,578.6 296.0,578.6 297.0,578.6 298.0,578.6 299.0,577.7 300.0,576.6 301.0,575.0 302.0,573.0 303.0,566.2 304.0,561.0 305.0,558.3 306.0,556.3 307.0,555.7 308.0,558.9 309.0,567.1 310.0,572.5 311.0,574.3 312.0,575.8 313.0,576.2 314.0,576.4 315.0,576.3 316.0,575.9 317.0,575.7 318.0,574.6 319.0,573.6 320.0,569.5 321.0,566.7 322.0,563.5 323.0,561.9 324.0,560.1 325.0,556.8 326.0,555.8 327.0,557.7 328.0,562.3 329.0,565.9 330.0,568.6 331.0,570.1 332.0,571.6 333.0,571.7 334.0,570.1 335.0,570.6 336.0,571.7 337.0,572.0 338.0,571.8 339.0,573.1 340.0,571.1 341.0,570.1 342.0,565.0 343.0,564.6 344.0,562.5 345.0,564.2 346.0,566.3 347.0,566.2 348.0,565.1 349.0,561.4 350.0,555.0 351.0,550.2 352.0,543.2 353.0,545.1 354.0,548.3 355.0,550.2 356.0,552.7 357.0,556.9 358.0,559.3 359.0,561.4 360.0,563.4 361.0,565.0 362.0,565.0 363.0,564.1 364.0,565.5 365.0,564.6 366.0,563.3 367.0,560.4 368.0,555.9 369.0,555.3 370.0,553.1 371.0,553.4 372.0,553.0 373.0,554.2 374.0,556.2 375.0,557.6 376.0,558.9 377.0,562.1 378.0,563.4 379.0,566.9 380.0,567.4 381.0,567.7 382.0,566.6 383.0,568.2 384.0,567.7 385.0,567.9 386.0,569.7 387.0,570.0 388.0,569.7 389.0,571.6 390.0,572.0 391.0,573.1 392.0,573.4 393.0,573.6 394.0,574.2 395.0,573.7 396.0,574.3 397.0,573.7 398.0,574.4 399.0,574.5 400.0,574.3 401.0,574.3 402.0,574.2 403.0,574.9 404.0,574.7 405.0,575.2 406.0,575.0 407.0,575.6 408.0,575.3 409.0,575.7 410.0,575.8 411.0,575.6 412.0,575.7 413.0,575.9 414.0,575.8 415.0,576.5 416.0,577.1 417.0,577.6 418.0,578.1 419.0,578.2 420.0,578.2 421.0,578.3 422.0,578.1 423.0,578.3 424.0,578.1 425.0,578.1 426.0,578.2 427.0,578.2 428.0,578.2 429.0,578.2 430.0,578.7 431.0,578.9 432.0,578.9 433.0,578.9 434.0,578.9 435.0,578.9 436.0,578.9 437.0,578.9 438.0,578.9 439.0,578.9 440.0,578.9 441.0,578.9 442.0,578.9 443.0,578.9 444.0,578.9 445.0,578.9 446.0,578.9 447.0,578.9 448.0,578.9 449.0,578.9 450.0,578.8 451.0,577.6 452.0,576.3 453.0,575.1 454.0,574.9 455.0,574.5 456.0,574.9 457.0,575.5 458.0,575.0 459.0,574.2 460.0,573.6 461.0,572.1 462.0,570.6 463.0,566.8 464.0,561.1 465.0,558.2 466.0,556.5 467.0,554.5 468.0,553.2 469.0,553.8 470.0,555.2 471.0,554.5 472.0,555.9 473.0,555.5 474.0,556.6 475.0,561.8 476.0,562.8 477.0,566.5 478.0,571.4 479.0,575.2 480.0,574.2 481.0,573.5 482.0,573.5 483.0,573.5 484.0,574.3 485.0,575.4 486.0,575.1 487.0,574.9 488.0,574.9 489.0,574.8 490.0,574.3 491.0,574.0 492.0,574.7 493.0,573.6 494.0,573.0 495.0,572.3 496.0,571.4 497.0,570.5 498.0,568.2 499.0,568.2 500.0,569.4 501.0,571.6 502.0,572.5 503.0,574.2 504.0,573.5 505.0,572.8 506.0,571.5 507.0,570.9 508.0,569.7 509.0,571.3 510.0,573.0 511.0,574.2 512.0,573.4 513.0,573.9 514.0,573.8 515.0,573.8 516.0,573.5 517.0,573.4 518.0,573.6 519.0,575.2 520.0,576.3 521.0,576.9 522.0,577.3 523.0,577.9 524.0,578.2 525.0,578.3 526.0,578.5 527.0,578.5 528.0,578.9 529.0,578.9 530.0,578.9 531.0,578.9 532.0,578.9 533.0,578.9 534.0,578.9 535.0,578.9 536.0,578.9 537.0,578.9 538.0,578.9 539.0,578.9 540.0,578.9 541.0,578.9 542.0,578.9 543.0,578.9 544.0,578.9 545.0,578.9 546.0,578.9 547.0,578.9 548.0,578.9 549.0,578.9 550.0,578.9 551.0,578.9 552.0,578.9 553.0,578.9 554.0,578.9 555.0,578.9 556.0,578.9 557.0,578.9 558.0,578.9 559.0,578.9 560.0,578.9 561.0,578.9 562.0,578.9 563.0,578.9 564.0,578.9 565.0,578.9 566.0,578.9 567.0,578.9 568.0,578.9 569.0,578.9 570.0,578.9 571.0,578.9 572.0,578.9 573.0,576.0 574.0,572.4 575.0,569.3 576.0,570.4 577.0,572.9 578.0,576.5 579.0,576.2 580.0,576.0 581.0,575.6 582.0,575.6 583.0,571.9 584.0,561.7 585.0,553.2 586.0,552.2 587.0,556.5 588.0,564.5 589.0,573.4 590.0,575.0 591.0,575.6 592.0,576.5 593.0,576.6 594.0,577.1 595.0,577.3 596.0,577.6 597.0,577.5 598.0,575.8 599.0,574.4 600.0,572.8 601.0,572.3 602.0,570.2 603.0,569.6 604.0,571.3 605.0,572.9 606.0,574.0 607.0,575.1 608.0,576.9 609.0,578.3 610.0,578.2 611.0,578.4 612.0,578.4 613.0,578.5 614.0,578.4 615.0,578.6 616.0,578.6 617.0,578.8 618.0,578.7 619.0,578.8 620.0,578.9 621.0,578.9 622.0,578.9 623.0,578.9 624.0,578.9 625.0,578.7 626.0,578.7 627.0,578.8 628.0,578.6 629.0,578.7 630.0,578.6 631.0,578.5 632.0,578.5 633.0,578.5 634.0,578.5 635.0,578.5 636.0,578.4 637.0,578.5 638.0,578.4 639.0,578.4 640.0,578.3 641.0,578.2 642.0,578.3 643.0,578.3 644.0,578.4 645.0,578.8 646.0,578.8 647.0,578.7 648.0,578.5 649.0,578.7 650.0,578.9 651.0,578.9 652.0,578.9 653.0,578.9 654.0,578.9 655.0,578.9 656.0,578.9 657.0,578.9 658.0,578.9 659.0,578.9 660.0,578.9 661.0,578.9 662.0,578.9 663.0,578.9 664.0,578.9 665.0,578.3 666.0,577.4 667.0,576.1 668.0,575.7 669.0,575.4 670.0,574.9 671.0,574.3 672.0,573.3 673.0,573.3 674.0,571.4 675.0,570.8 676.0,568.9 677.0,569.3 678.0,571.0 679.0,573.1 680.0,575.6 681.0,576.3 682.0,577.1 683.0,577.9 684.0,577.4 685.0,575.7 686.0,574.5 687.0,572.6 688.0,568.6 689.0,562.6 690.0,557.5 691.0,555.5 692.0,558.9 693.0,558.4 694.0,562.0 695.0,561.0 696.0,561.5 697.0,560.2 698.0,563.9 699.0,564.3 700.0,566.7 701.0,566.1 702.0,568.9 703.0,570.2 704.0,572.3 705.0,574.4 706.0,576.4 707.0,577.0 708.0,577.3 709.0,577.9 710.0,578.3 711.0,578.7 712.0,578.7 713.0,578.9 714.0,578.9 715.0,578.9 716.0,578.9 717.0,578.9 718.0,578.9 719.0,578.9 720.0,578.9 721.0,578.9 722.0,578.9 723.0,578.9 724.0,578.9 725.0,578.9 726.0,578.9 727.0,578.9 728.0,578.9 729.0,578.9 730.0,578.9 731.0,578.9 732.0,578.9 733.0,578.9 734.0,578.9 735.0,578.9 736.0,578.9 737.0,578.9 738.0,578.9 739.0,578.9 740.0,578.9 741.0,578.9 742.0,578.9 743.0,578.9 744.0,578.9 745.0,578.0 746.0,576.4 747.0,572.0 748.0,565.1 749.0,558.3 750.0,559.6 751.0,559.3 752.0,557.0 753.0,555.7 754.0,556.4 755.0,557.8 756.0,555.5 757.0,554.4 758.0,555.0 759.0,558.5 760.0,559.5 761.0,559.7 762.0,560.6 763.0,561.8 764.0,562.6 765.0,564.0 766.0,565.0 767.0,563.7 768.0,564.1 769.0,565.2 770.0,562.4 771.0,561.9 772.0,559.2 773.0,553.1 774.0,543.3 775.0,535.1 776.0,545.0 777.0,550.8 778.0,555.1 779.0,547.8 780.0,546.4 781.0,545.1 782.0,544.6 783.0,549.4 784.0,552.5 785.0,558.0 786.0,561.3 787.0,563.1 788.0,567.3 789.0,570.7 790.0,572.6 791.0,575.8 792.0,576.2 793.0,575.7 794.0,575.7 795.0,574.9 796.0,568.1 797.0,565.6 798.0,562.2 799.0,560.7 800.0,560.8 801.0,562.2 802.0,564.0 803.0,565.3 804.0,569.0 805.0,573.3 806.0,575.2 807.0,575.6 808.0,575.3 809.0,575.5 810.0,576.0 811.0,575.8 812.0,576.0 813.0,576.0 814.0,576.5 815.0,576.3 816.0,572.2 817.0,568.6 818.0,563.4 819.0,559.3 820.0,555.7 821.0,558.4 822.0,560.2 823.0,561.5 824.0,563.6 825.0,565.1 826.0,569.0 827.0,573.5 828.0,575.9 829.0,576.4 830.0,576.3 831.0,576.2 832.0,576.0 833.0,573.6 834.0,572.8 835.0,571.2 836.0,569.2 837.0,570.4 838.0,571.3 839.0,572.8 840.0,572.9 841.0,574.3 842.0,575.5 843.0,576.2 844.0,576.2 845.0,575.4 846.0,574.9 847.0,575.1 848.0,574.2 849.0,572.8 850.0,571.0 851.0,568.8 852.0,567.1 853.0,567.2 854.0,566.3 855.0,570.2 856.0,571.8 857.0,574.5 858.0,576.0 859.0,577.7 860.0,578.2 861.0,577.9 862.0,577.9 863.0,577.8 864.0,576.7 865.0,575.0 866.0,573.6 867.0,571.4 868.0,569.5 869.0,569.0 870.0,567.1 871.0,568.2 872.0,568.5 873.0,568.1 874.0,567.7 875.0,568.6 876.0,569.4 877.0,569.5 878.0,571.2 879.0,571.4 880.0,574.0 881.0,575.3 882.0,576.4 883.0,575.6 884.0,575.6 885.0,576.0 886.0,576.4 887.0,576.9 888.0,577.2 889.0,578.0 890.0,578.3 891.0,578.3 892.0,578.5 893.0,578.8 894.0,577.8 895.0,576.1 896.0,574.4 897.0,572.3 898.0,569.4 899.0,567.4 900.0,563.9 901.0,562.7 902.0,565.5 903.0,567.8 904.0,569.2 905.0,570.7 906.0,572.1 907.0,570.3 908.0,567.3 909.0,564.4 910.0,559.4 911.0,560.2 912.0,561.2 913.0,560.9 914.0,562.5 915.0,566.3 916.0,567.7 917.0,570.6 918.0,569.8 919.0,568.1 920.0,565.2 921.0,568.9 922.0,570.1 923.0,569.8 924.0,568.0 925.0,567.6 926.0,567.4 927.0,566.6 928.0,566.7 929.0,566.1 930.0,567.7 931.0,569.6 932.0,570.3 933.0,572.3 934.0,574.6 935.0,575.5 936.0,575.4 937.0,574.8 938.0,574.6 939.0,574.2 940.0,574.9 941.0,575.5 942.0,575.8 943.0,575.9 944.0,576.5 945.0,576.9 946.0,577.1 947.0,577.5 948.0,577.9 949.0,578.1 950.0,577.0 951.0,575.6 952.0,574.3 953.0,574.0 954.0,574.4 955.0,574.8 956.0,576.0 957.0,576.1 958.0,576.8 959.0,576.9 960.0,577.4 961.0,577.3 962.0,577.8 963.0,578.0 964.0,578.2 965.0,578.3 966.0,578.6 967.0,578.7 968.0,578.9 969.0,578.9 970.0,578.9 971.0,578.9 972.0,578.9 973.0,578.9 974.0,578.9 975.0,578.9 976.0,578.9 977.0,578.9 978.0,578.9 979.0,578.9 980.0,578.9 981.0,578.9 982.0,578.9 983.0,578.9 984.0,578.9 985.0,578.9 986.0,578.9 987.0,578.9 988.0,578.9 989.0,578.9 990.0,578.9 991.0,578.9 992.0,578.9 993.0,578.9 994.0,578.9 995.0,578.9 996.0,578.9 997.0,578.9 998.0,578.9 999.0,578.9 1000.0,578.9 1001.0,578.9 1002.0,578.9 1003.0,578.9 1004.0,578.9 1005.0,578.9 1006.0,578.9 1007.0,578.9 1008.0,578.9 1009.0,578.9 1010.0,578.9 1011.0,578.9 1012.0,578.9 1013.0,578.9 1014.0,578.9 1015.0,578.9 1016.0,578.9 1017.0,578.2 1018.0,576.6 1019.0,575.0 1020.0,573.6 1021.0,572.3 1022.0,570.9 1023.0,569.7 1024.0,570.7 1025.0,571.9 1026.0,571.5 1027.0,571.6 1028.0,572.9 1029.0,573.5 1030.0,575.2 1031.0,575.9 1032.0,575.8 1033.0,576.1 1034.0,576.3 1035.0,576.4 1036.0,576.6 1037.0,576.7 1038.0,576.4 1038.0,582.2 1037.0,582.1 1036.0,582.4 1035.0,582.5 1034.0,582.3 1033.0,582.1 1032.0,582.1 1031.0,582.1 1030.0,583.4 1029.0,585.2 1028.0,586.0 1027.0,587.0 1026.0,588.2 1025.0,588.0 1024.0,589.2 1023.0,589.7 1022.0,588.7 1021.0,587.7 1020.0,584.9 1019.0,582.6 1018.0,581.5 1017.0,580.8 1016.0,580.4 1015.0,580.4 1014.0,580.4 1013.0,580.4 1012.0,580.4 1011.0,580.4 1010.0,580.4 1009.0,580.4 1008.0,580.4 1007.0,580.4 1006.0,580.4 1005.0,580.4 1004.0,580.4 1003.0,580.4 1002.0,580.4 1001.0,580.4 1000.0,580.4 999.0,580.4 998.0,580.4 997.0,580.4 996.0,580.4 995.0,580.4 994.0,580.4 993.0,580.4 992.0,580.4 991.0,580.4 990.0,580.4 989.0,580.4 988.0,580.4 987.0,580.4 986.0,580.4 985.0,580.4 984.0,580.4 983.0,580.4 982.0,580.4 981.0,580.4 980.0,580.4 979.0,580.4 978.0,580.4 977.0,580.4 976.0,580.4 975.0,580.4 974.0,580.4 973.0,580.4 972.0,580.4 971.0,580.4 970.0,580.4 969.0,580.4 968.0,580.4 967.0,580.5 966.0,580.5 965.0,580.5 964.0,580.5 963.0,580.9 962.0,581.0 961.0,581.3 960.0,581.7 959.0,581.6 958.0,582.2 957.0,582.6 956.0,583.6 955.0,584.7 954.0,585.2 953.0,586.4 952.0,584.9 951.0,583.3 950.0,582.2 949.0,580.6 948.0,580.6 947.0,580.8 946.0,581.0 945.0,581.2 944.0,581.6 943.0,582.3 942.0,582.7 941.0,583.3 940.0,583.5 939.0,584.0 938.0,583.8 937.0,583.1 936.0,583.0 935.0,582.4 934.0,583.8 933.0,585.4 932.0,587.8 931.0,589.3 930.0,590.5 929.0,591.1 928.0,594.4 927.0,594.2 926.0,593.5 925.0,593.5 924.0,592.1 923.0,591.9 922.0,591.4 921.0,590.4 920.0,589.7 919.0,590.1 918.0,591.0 917.0,593.2 916.0,593.3 915.0,595.1 914.0,596.9 913.0,596.6 912.0,597.9 911.0,598.2 910.0,597.5 909.0,594.6 908.0,592.9 907.0,590.7 906.0,589.5 905.0,587.9 904.0,588.4 903.0,589.4 902.0,592.4 901.0,593.7 900.0,592.1 899.0,589.6 898.0,587.1 897.0,584.9 896.0,583.8 895.0,582.2 894.0,581.1 893.0,580.4 892.0,580.4 891.0,580.5 890.0,580.5 889.0,580.8 888.0,581.1 887.0,581.2 886.0,581.5 885.0,581.9 884.0,582.1 883.0,583.0 882.0,583.3 881.0,583.9 880.0,585.0 879.0,586.8 878.0,588.2 877.0,590.3 876.0,591.0 875.0,590.1 874.0,590.6 873.0,590.8 872.0,590.3 871.0,591.0 870.0,590.4 869.0,589.2 868.0,587.0 867.0,585.3 866.0,584.3 865.0,583.0 864.0,581.9 863.0,581.2 862.0,581.1 861.0,581.1 860.0,581.0 859.0,581.7 858.0,583.2 857.0,584.5 856.0,586.9 855.0,588.7 854.0,591.7 853.0,592.3 852.0,591.1 851.0,589.2 850.0,587.7 849.0,586.5 848.0,584.8 847.0,584.0 846.0,583.6 845.0,583.1 844.0,582.5 843.0,582.7 842.0,583.4 841.0,584.5 840.0,585.7 839.0,587.0 838.0,588.7 837.0,591.0 836.0,591.6 835.0,588.3 834.0,586.7 833.0,585.5 832.0,583.4 831.0,582.7 830.0,583.3 829.0,583.7 828.0,584.4 827.0,587.3 826.0,592.6 825.0,596.1 824.0,600.0 823.0,598.7 822.0,603.3 821.0,603.9 820.0,604.2 819.0,602.5 818.0,597.2 817.0,591.8 816.0,587.4 815.0,582.5 814.0,582.8 813.0,582.9 812.0,583.2 811.0,584.0 810.0,583.9 809.0,584.1 808.0,584.6 807.0,585.3 806.0,585.6 805.0,587.2 804.0,589.8 803.0,593.7 802.0,595.6 801.0,595.6 800.0,597.6 799.0,597.6 798.0,594.5 797.0,592.0 796.0,588.5 795.0,585.4 794.0,583.9 793.0,583.2 792.0,582.8 791.0,583.2 790.0,585.8 789.0,589.7 788.0,593.7 787.0,594.7 786.0,597.4 785.0,600.6 784.0,602.7 783.0,606.5 782.0,610.9 781.0,617.4 780.0,613.7 779.0,611.8 778.0,606.2 777.0,606.2 776.0,615.0 775.0,613.6 774.0,606.1 773.0,601.5 772.0,595.9 771.0,593.2 770.0,589.9 769.0,589.2 768.0,591.2 767.0,591.3 766.0,591.6 765.0,592.1 764.0,594.5 763.0,596.3 762.0,595.3 761.0,595.7 760.0,597.1 759.0,600.0 758.0,600.5 757.0,600.5 756.0,602.0 755.0,603.1 754.0,601.3 753.0,598.8 752.0,596.8 751.0,595.9 750.0,595.1 749.0,593.9 748.0,590.2 747.0,584.8 746.0,581.9 745.0,580.9 744.0,580.4 743.0,580.4 742.0,580.4 741.0,580.4 740.0,580.4 739.0,580.4 738.0,580.4 737.0,580.4 736.0,580.4 735.0,580.4 734.0,580.4 733.0,580.4 732.0,580.4 731.0,580.4 730.0,580.4 729.0,580.4 728.0,580.4 727.0,580.4 726.0,580.4 725.0,580.4 724.0,580.4 723.0,580.4 722.0,580.4 721.0,580.4 720.0,580.4 719.0,580.4 718.0,580.4 717.0,580.4 716.0,580.4 715.0,580.4 714.0,580.4 713.0,580.4 712.0,580.6 711.0,580.6 710.0,580.7 709.0,580.8 708.0,580.9 707.0,581.3 706.0,582.3 705.0,583.3 704.0,585.1 703.0,588.1 702.0,589.7 701.0,591.7 700.0,590.4 699.0,592.4 698.0,592.6 697.0,594.9 696.0,594.6 695.0,596.7 694.0,599.0 693.0,602.0 692.0,602.7 691.0,603.1 690.0,604.3 689.0,599.0 688.0,594.0 687.0,587.8 686.0,586.0 685.0,584.9 684.0,582.7 683.0,582.1 682.0,583.3 681.0,583.9 680.0,585.9 679.0,587.5 678.0,590.5 677.0,590.2 676.0,589.8 675.0,588.0 674.0,586.8 673.0,585.8 672.0,585.0 671.0,584.8 670.0,583.9 669.0,583.4 668.0,583.0 667.0,582.2 666.0,581.7 665.0,580.8 664.0,580.4 663.0,580.4 662.0,580.4 661.0,580.4 660.0,580.4 659.0,580.4 658.0,580.4 657.0,580.4 656.0,580.4 655.0,580.4 654.0,580.4 653.0,580.4 652.0,580.4 651.0,580.4 650.0,580.4 649.0,580.4 648.0,580.4 647.0,580.5 646.0,580.5 645.0,580.5 644.0,580.5 643.0,580.5 642.0,580.5 641.0,580.6 640.0,580.6 639.0,580.5 638.0,580.4 637.0,580.5 636.0,580.4 635.0,580.5 634.0,580.4 633.0,580.5 632.0,580.5 631.0,580.4 630.0,580.4 629.0,580.4 628.0,580.5 627.0,580.4 626.0,580.4 625.0,580.4 624.0,580.4 623.0,580.4 622.0,580.4 621.0,580.4 620.0,580.4 619.0,580.5 618.0,580.5 617.0,580.5 616.0,580.6 615.0,580.8 614.0,580.7 613.0,580.8 612.0,581.0 611.0,581.0 610.0,581.0 609.0,581.2 608.0,582.3 607.0,584.1 606.0,585.8 605.0,586.0 604.0,587.0 603.0,587.7 602.0,586.7 601.0,586.8 600.0,585.2 599.0,584.8 598.0,583.6 597.0,582.4 596.0,582.1 595.0,582.5 594.0,582.2 593.0,582.5 592.0,582.2 591.0,582.1 590.0,587.6 589.0,592.7 588.0,596.1 587.0,600.9 586.0,603.1 585.0,598.5 584.0,590.6 583.0,584.6 582.0,582.2 581.0,582.9 580.0,582.8 579.0,583.3 578.0,583.1 577.0,586.7 576.0,589.5 575.0,589.8 574.0,586.9 573.0,583.7 572.0,580.5 571.0,580.5 570.0,580.5 569.0,580.5 568.0,580.6 567.0,580.5 566.0,580.5 565.0,580.6 564.0,580.6 563.0,580.5 562.0,580.6 561.0,580.6 560.0,580.5 559.0,580.5 558.0,580.5 557.0,580.6 556.0,580.6 555.0,580.5 554.0,580.5 553.0,580.6 552.0,580.5 551.0,580.6 550.0,580.5 549.0,580.5 548.0,580.5 547.0,580.5 546.0,580.5 545.0,580.5 544.0,580.5 543.0,580.5 542.0,580.5 541.0,580.6 540.0,580.5 539.0,580.5 538.0,580.5 537.0,580.5 536.0,580.6 535.0,580.5 534.0,580.6 533.0,580.5 532.0,580.5 531.0,580.5 530.0,580.5 529.0,580.6 528.0,580.5 527.0,580.5 526.0,580.6 525.0,580.9 524.0,581.0 523.0,581.3 522.0,582.1 521.0,582.9 520.0,583.6 519.0,585.4 518.0,586.4 517.0,587.1 516.0,587.9 515.0,587.7 514.0,586.6 513.0,587.0 512.0,587.1 511.0,586.8 510.0,587.2 509.0,588.9 508.0,589.2 507.0,590.2 506.0,589.2 505.0,587.4 504.0,586.2 503.0,586.1 502.0,586.4 501.0,588.3 500.0,588.9 499.0,589.5 498.0,588.8 497.0,588.7 496.0,588.1 495.0,587.9 494.0,586.3 493.0,586.4 492.0,585.4 491.0,585.4 490.0,584.4 489.0,584.0 488.0,583.8 487.0,583.3 486.0,583.2 485.0,583.2 484.0,584.1 483.0,585.5 482.0,584.5 481.0,583.5 480.0,582.8 479.0,586.1 478.0,592.3 477.0,597.4 476.0,598.6 475.0,601.6 474.0,603.2 473.0,604.0 472.0,607.7 471.0,610.3 470.0,607.6 469.0,612.0 468.0,612.7 467.0,614.6 466.0,607.9 465.0,602.2 464.0,599.6 463.0,594.8 462.0,590.6 461.0,589.4 460.0,587.8 459.0,587.0 458.0,585.8 457.0,585.5 456.0,584.8 455.0,583.9 454.0,583.6 453.0,583.2 452.0,582.2 451.0,581.3 450.0,580.4 449.0,580.4 448.0,580.4 447.0,580.4 446.0,580.4 445.0,580.4 444.0,580.4 443.0,580.4 442.0,580.4 441.0,580.4 440.0,580.4 439.0,580.4 438.0,580.4 437.0,580.4 436.0,580.4 435.0,580.4 434.0,580.4 433.0,580.4 432.0,580.4 431.0,580.4 430.0,580.4 429.0,580.6 428.0,580.6 427.0,580.5 426.0,580.6 425.0,580.5 424.0,580.5 423.0,580.5 422.0,580.5 421.0,580.5 420.0,580.5 419.0,580.5 418.0,580.5 417.0,581.0 416.0,581.4 415.0,581.8 414.0,582.3 413.0,582.5 412.0,583.3 411.0,583.3 410.0,583.9 409.0,584.3 408.0,584.6 407.0,585.0 406.0,584.7 405.0,584.6 404.0,585.3 403.0,585.7 402.0,585.2 401.0,586.0 400.0,585.4 399.0,586.3 398.0,586.0 397.0,587.1 396.0,587.3 395.0,587.0 394.0,587.1 393.0,587.4 392.0,587.0 391.0,587.5 390.0,587.6 389.0,587.9 388.0,588.8 387.0,589.1 386.0,590.6 385.0,591.4 384.0,590.6 383.0,592.5 382.0,593.6 381.0,593.9 380.0,593.6 379.0,594.8 378.0,594.8 377.0,597.8 376.0,596.7 375.0,598.9 374.0,598.7 373.0,597.1 372.0,597.2 371.0,596.3 370.0,597.1 369.0,599.7 368.0,600.5 367.0,601.1 366.0,601.1 365.0,600.9 364.0,599.3 363.0,598.9 362.0,598.1 361.0,598.6 360.0,596.7 359.0,596.9 358.0,599.3 357.0,602.2 356.0,605.3 355.0,606.5 354.0,611.6 353.0,610.6 352.0,608.2 351.0,603.8 350.0,600.3 349.0,599.5 348.0,597.9 347.0,595.4 346.0,592.3 345.0,592.4 344.0,592.0 343.0,591.6 342.0,590.9 341.0,588.5 340.0,587.3 339.0,586.9 338.0,585.9 337.0,586.8 336.0,587.2 335.0,586.1 334.0,585.6 333.0,585.4 332.0,585.7 331.0,585.6 330.0,587.0 329.0,590.4 328.0,594.6 327.0,598.5 326.0,604.2 325.0,602.8 324.0,600.7 323.0,596.5 322.0,593.0 321.0,589.9 320.0,585.7 319.0,583.4 318.0,583.1 317.0,582.4 316.0,582.2 315.0,581.8 314.0,581.7 313.0,582.0 312.0,582.3 311.0,582.0 310.0,585.4 309.0,591.8 308.0,595.5 307.0,600.3 306.0,597.8 305.0,596.9 304.0,596.0 303.0,590.2 302.0,585.5 301.0,583.4 300.0,582.7 299.0,581.4 298.0,580.5 297.0,580.5 296.0,580.5 295.0,580.5 294.0,580.5 293.0,580.5 292.0,580.6 291.0,580.6 290.0,580.8 289.0,581.3 288.0,581.6 287.0,581.8 286.0,581.9 285.0,582.0 284.0,582.2 283.0,581.9 282.0,581.6 281.0,581.6 280.0,581.2 279.0,581.1 278.0,580.9 277.0,580.5 276.0,580.6 275.0,580.5 274.0,580.6 273.0,580.5 272.0,580.5 271.0,580.5 270.0,580.5 269.0,580.6 268.0,580.6 267.0,580.7 266.0,581.2 265.0,581.5 264.0,582.2 263.0,583.1 262.0,583.9 261.0,583.2 260.0,582.4 259.0,582.8 258.0,582.9 257.0,583.3 256.0,583.7 255.0,583.0 254.0,582.3 253.0,581.6 252.0,581.7 251.0,581.7 250.0,581.6 249.0,582.0 248.0,582.9 247.0,583.7 246.0,584.4 245.0,584.4 244.0,585.1 243.0,585.1 242.0,584.7 241.0,584.3 240.0,583.2 239.0,583.2 238.0,582.5 237.0,582.3 236.0,582.3 235.0,582.2 234.0,582.1 233.0,580.4" fill="#a8ef3f"/><polygon points="1038.0,576.3 1039.0,576.6 1040.0,576.1 1041.0,576.0 1042.0,575.9 1043.0,576.1 1044.0,576.5 1045.0,576.7 1046.0,577.3 1047.0,577.4 1048.0,577.7 1049.0,577.7 1050.0,577.6 1051.0,577.7 1052.0,577.6 1053.0,571.3 1054.0,565.2 1055.0,564.2 1056.0,564.6 1057.0,562.8 1058.0,563.6 1059.0,565.8 1060.0,565.3 1061.0,567.0 1062.0,566.1 1063.0,566.7 1064.0,566.9 1065.0,566.5 1066.0,565.2 1067.0,562.9 1068.0,558.7 1069.0,550.4 1070.0,543.5 1071.0,550.9 1072.0,550.5 1073.0,554.9 1074.0,557.2 1075.0,561.0 1076.0,565.0 1077.0,567.4 1078.0,570.9 1079.0,567.1 1080.0,564.7 1081.0,560.6 1082.0,555.8 1083.0,547.7 1084.0,551.1 1085.0,551.4 1086.0,555.8 1087.0,556.9 1088.0,559.7 1089.0,561.9 1090.0,564.4 1091.0,567.0 1092.0,570.0 1093.0,573.1 1094.0,575.1 1095.0,578.3 1096.0,577.7 1097.0,576.4 1098.0,575.1 1099.0,574.0 1100.0,570.4 1101.0,570.3 1102.0,572.0 1103.0,573.2 1104.0,567.8 1105.0,563.8 1106.0,559.7 1107.0,561.1 1108.0,560.8 1109.0,562.2 1110.0,563.9 1111.0,568.6 1112.0,572.6 1113.0,573.7 1114.0,574.6 1115.0,575.9 1116.0,576.8 1117.0,577.1 1118.0,577.8 1119.0,578.2 1120.0,578.5 1121.0,578.9 1122.0,578.9 1123.0,578.9 1124.0,578.9 1125.0,578.9 1126.0,578.9 1127.0,578.9 1128.0,578.9 1129.0,578.9 1130.0,578.9 1131.0,578.9 1132.0,578.9 1133.0,578.9 1134.0,578.9 1135.0,578.9 1136.0,578.9 1137.0,578.9 1138.0,578.9 1139.0,578.9 1140.0,578.9 1141.0,578.9 1142.0,578.9 1143.0,578.9 1144.0,578.9 1145.0,578.9 1146.0,578.9 1147.0,578.9 1148.0,578.9 1149.0,578.9 1150.0,578.9 1151.0,578.9 1152.0,578.9 1153.0,578.9 1154.0,578.9 1155.0,578.9 1156.0,578.9 1157.0,578.9 1158.0,578.9 1159.0,578.8 1160.0,578.4 1161.0,578.2 1162.0,578.5 1163.0,578.8 1164.0,578.8 1165.0,578.9 1166.0,578.5 1167.0,577.1 1168.0,575.8 1169.0,575.0 1170.0,575.3 1171.0,574.8 1172.0,574.9 1173.0,574.4 1174.0,574.1 1175.0,574.5 1176.0,573.0 1177.0,571.7 1178.0,570.2 1179.0,568.3 1180.0,564.3 1181.0,558.4 1182.0,553.7 1183.0,553.1 1184.0,549.7 1185.0,547.6 1186.0,549.6 1187.0,547.2 1188.0,548.9 1189.0,545.2 1190.0,548.1 1191.0,548.4 1192.0,550.6 1193.0,548.0 1194.0,553.1 1195.0,555.9 1196.0,556.2 1197.0,560.0 1198.0,560.7 1199.0,562.3 1200.0,561.2 1201.0,564.1 1202.0,563.5 1203.0,564.1 1204.0,564.7 1205.0,567.4 1206.0,567.3 1207.0,568.6 1208.0,569.3 1209.0,569.9 1210.0,571.5 1211.0,571.7 1212.0,572.6 1213.0,574.1 1214.0,574.5 1215.0,575.7 1216.0,576.2 1217.0,577.3 1218.0,577.9 1219.0,577.9 1220.0,577.9 1221.0,578.2 1222.0,578.1 1223.0,578.3 1224.0,578.3 1225.0,578.4 1226.0,578.5 1227.0,578.9 1228.0,578.9 1229.0,578.9 1230.0,578.9 1231.0,578.9 1232.0,578.9 1233.0,578.9 1234.0,578.9 1235.0,578.9 1236.0,578.9 1237.0,578.9 1238.0,578.9 1239.0,578.9 1240.0,578.9 1241.0,578.9 1242.0,578.9 1243.0,578.9 1244.0,578.9 1245.0,578.9 1246.0,578.9 1247.0,578.9 1248.0,578.9 1249.0,578.9 1250.0,578.5 1251.0,575.8 1252.0,573.4 1253.0,570.9 1254.0,568.2 1255.0,566.7 1256.0,562.8 1257.0,563.8 1258.0,564.6 1259.0,564.8 1260.0,566.9 1261.0,568.2 1262.0,572.3 1263.0,575.1 1264.0,577.4 1265.0,578.5 1266.0,578.9 1267.0,578.9 1268.0,578.9 1268.0,580.5 1267.0,580.5 1266.0,580.5 1265.0,580.7 1264.0,581.1 1263.0,581.7 1262.0,582.1 1261.0,583.8 1260.0,585.9 1259.0,588.7 1258.0,590.1 1257.0,590.3 1256.0,590.0 1255.0,588.9 1254.0,587.9 1253.0,586.2 1252.0,584.2 1251.0,582.5 1250.0,580.7 1249.0,580.4 1248.0,580.4 1247.0,580.4 1246.0,580.4 1245.0,580.4 1244.0,580.4 1243.0,580.4 1242.0,580.4 1241.0,580.4 1240.0,580.4 1239.0,580.5 1238.0,580.5 1237.0,580.4 1236.0,580.5 1235.0,580.4 1234.0,580.5 1233.0,580.5 1232.0,580.5 1231.0,580.4 1230.0,580.6 1229.0,580.5 1228.0,580.6 1227.0,580.5 1226.0,580.5 1225.0,580.5 1224.0,580.6 1223.0,580.7 1222.0,580.8 1221.0,580.8 1220.0,580.9 1219.0,581.0 1218.0,581.1 1217.0,581.0 1216.0,581.0 1215.0,581.8 1214.0,582.6 1213.0,583.5 1212.0,584.9 1211.0,585.2 1210.0,586.7 1209.0,588.3 1208.0,588.4 1207.0,589.4 1206.0,591.2 1205.0,591.6 1204.0,594.0 1203.0,593.1 1202.0,594.5 1201.0,595.0 1200.0,594.3 1199.0,594.4 1198.0,596.5 1197.0,595.0 1196.0,596.8 1195.0,598.3 1194.0,602.2 1193.0,604.3 1192.0,606.0 1191.0,605.7 1190.0,605.8 1189.0,606.6 1188.0,606.2 1187.0,605.5 1186.0,605.2 1185.0,605.3 1184.0,603.3 1183.0,605.8 1182.0,602.1 1181.0,599.6 1180.0,595.1 1179.0,593.9 1178.0,590.7 1177.0,588.4 1176.0,587.0 1175.0,585.2 1174.0,585.4 1173.0,585.2 1172.0,584.4 1171.0,584.3 1170.0,583.7 1169.0,583.5 1168.0,583.3 1167.0,581.8 1166.0,580.7 1165.0,580.5 1164.0,580.4 1163.0,580.4 1162.0,580.4 1161.0,580.4 1160.0,580.4 1159.0,580.4 1158.0,580.4 1157.0,580.4 1156.0,580.5 1155.0,580.4 1154.0,580.4 1153.0,580.4 1152.0,580.5 1151.0,580.5 1150.0,580.5 1149.0,580.4 1148.0,580.4 1147.0,580.4 1146.0,580.4 1145.0,580.5 1144.0,580.4 1143.0,580.4 1142.0,580.4 1141.0,580.4 1140.0,580.4 1139.0,580.5 1138.0,580.5 1137.0,580.5 1136.0,580.5 1135.0,580.5 1134.0,580.5 1133.0,580.4 1132.0,580.4 1131.0,580.4 1130.0,580.4 1129.0,580.4 1128.0,580.5 1127.0,580.5 1126.0,580.5 1125.0,580.6 1124.0,580.5 1123.0,580.6 1122.0,580.5 1121.0,580.5 1120.0,580.9 1119.0,581.3 1118.0,581.7 1117.0,582.6 1116.0,583.5 1115.0,584.9 1114.0,586.8 1113.0,588.7 1112.0,592.7 1111.0,594.7 1110.0,597.2 1109.0,604.1 1108.0,605.9 1107.0,598.3 1106.0,595.0 1105.0,591.6 1104.0,590.0 1103.0,586.3 1102.0,586.5 1101.0,587.3 1100.0,586.6 1099.0,584.4 1098.0,582.7 1097.0,582.2 1096.0,581.5 1095.0,581.6 1094.0,583.4 1093.0,585.0 1092.0,587.5 1091.0,589.9 1090.0,592.5 1089.0,593.6 1088.0,596.8 1087.0,598.9 1086.0,602.4 1085.0,602.2 1084.0,606.7 1083.0,601.0 1082.0,597.4 1081.0,592.7 1080.0,591.1 1079.0,587.8 1078.0,586.2 1077.0,589.9 1076.0,591.9 1075.0,598.4 1074.0,603.1 1073.0,605.8 1072.0,613.5 1071.0,618.4 1070.0,619.1 1069.0,610.3 1068.0,602.1 1067.0,595.6 1066.0,594.7 1065.0,592.7 1064.0,592.1 1063.0,590.6 1062.0,591.2 1061.0,591.1 1060.0,592.5 1059.0,593.9 1058.0,593.3 1057.0,594.2 1056.0,593.9 1055.0,592.8 1054.0,593.1 1053.0,588.8 1052.0,583.5 1051.0,583.2 1050.0,582.7 1049.0,582.9 1048.0,582.5 1047.0,582.2 1046.0,583.0 1045.0,583.1 1044.0,584.2 1043.0,584.7 1042.0,584.4 1041.0,583.5 1040.0,583.5 1039.0,582.9 1038.0,582.1" fill="#e62a2a"/><rect x="260.0" y="466" width="2" height="227" fill="#0c5e0c"/><rect x="664.0" y="466" width="2" height="227" fill="#0c5e0c"/><rect x="1037.0" y="466" width="2" height="227" fill="#0c5e0c"/><path d="M651.5 466V693" stroke="#8e1b1b" stroke-width="1.6" stroke-dasharray="3 1.2"/><path d="M968.5 466V693" stroke="#8e1b1b" stroke-width="1.6" stroke-dasharray="3 1.2"/><rect x="1084" y="466" width="1" height="227" fill="#7fd6d6"/><path d="M254.5 684V693 M318.5 689V693 M382.5 684V693 M446.5 689V693 M510.5 684V693 M574.5 689V693 M638.5 684V693 M702.5 689V693 M766.5 684V693 M830.5 689V693 M894.5 684V693 M958.5 689V693 M1022.5 684V693 M1086.5 689V693 M1150.5 684V693 M1214.5 689V693" stroke="#bdbdbd" stroke-width="1"/><rect x="232.5" y="465.5" width="1037" height="228" fill="none" stroke="#ff0000" stroke-width="1"/></svg>
<div class="a t" style="left:266.0px;top:469.0px;font-size:13px;line-height:13px;color:#9d9d9d;font-weight:700;letter-spacing:0.04px;transform:scaleX(1.0092);transform-origin:0 0;text-shadow:1px 1px 0 #111;">Sorry.  - Well, then I home in Baghdad.</div>
<div class="a t" style="left:670.0px;top:469.0px;font-size:13px;line-height:13px;color:#9d9d9d;font-weight:700;letter-spacing:-0.02px;transform:scaleX(0.9955);transform-origin:0 0;text-shadow:1px 1px 0 #111;">Super, what is the address you in Baghdad?</div>
<div class="a t" style="left:1044.0px;top:469.0px;font-size:13px;line-height:13px;color:#9d9d9d;font-weight:700;letter-spacing:0.07px;transform:scaleX(1.0182);transform-origin:0 0;text-shadow:1px 1px 0 #111;">`My street.  - Yes, I understand.</div>
<div class="a t" style="left:266.0px;top:666.0px;font-size:13px;line-height:13px;color:#9d9d9d;font-weight:700;letter-spacing:0.28px;transform:scaleX(1.0725);transform-origin:0 0;text-shadow:1px 1px 0 #111;">#595  3.051</div>
<div class="a t" style="left:670.0px;top:666.0px;font-size:13px;line-height:13px;color:#9d9d9d;font-weight:700;letter-spacing:0.28px;transform:scaleX(1.0725);transform-origin:0 0;text-shadow:1px 1px 0 #111;">#596  2.380</div>
<div class="a t" style="left:1044.0px;top:666.0px;font-size:13px;line-height:13px;color:#9d9d9d;font-weight:700;letter-spacing:0.25px;transform:scaleX(1.0637);transform-origin:0 0;text-shadow:1px 1px 0 #111;">#597  1.810</div>
<div class="a t" style="left:257.5px;top:683.0px;font-size:9px;line-height:9px;color:#a8a8a8;letter-spacing:0.04px;transform:scaleX(1.0133);transform-origin:0 0;">50:52</div>
<div class="a t" style="left:385.5px;top:683.0px;font-size:9px;line-height:9px;color:#a8a8a8;letter-spacing:0.04px;transform:scaleX(1.0133);transform-origin:0 0;">50:53</div>
<div class="a t" style="left:513.5px;top:683.0px;font-size:9px;line-height:9px;color:#a8a8a8;letter-spacing:0.04px;transform:scaleX(1.0133);transform-origin:0 0;">50:54</div>
<div class="a t" style="left:641.5px;top:683.0px;font-size:9px;line-height:9px;color:#a8a8a8;letter-spacing:0.04px;transform:scaleX(1.0133);transform-origin:0 0;">50:55</div>
<div class="a t" style="left:769.5px;top:683.0px;font-size:9px;line-height:9px;color:#a8a8a8;letter-spacing:0.04px;transform:scaleX(1.0133);transform-origin:0 0;">50:56</div>
<div class="a t" style="left:897.5px;top:683.0px;font-size:9px;line-height:9px;color:#a8a8a8;letter-spacing:0.04px;transform:scaleX(1.0133);transform-origin:0 0;">50:57</div>
<div class="a t" style="left:1025.5px;top:683.0px;font-size:9px;line-height:9px;color:#a8a8a8;letter-spacing:0.04px;transform:scaleX(1.0133);transform-origin:0 0;">50:58</div>
<div class="a t" style="left:1153.5px;top:683.0px;font-size:9px;line-height:9px;color:#a8a8a8;letter-spacing:0.04px;transform:scaleX(1.0133);transform-origin:0 0;">50:59</div>
<svg style="left:0px;top:46px" width="400" height="40" viewBox="0 46 400 40"><defs><linearGradient id="gDoc" x1="0" y1="0" x2="0" y2="1"><stop offset="0" stop-color="#fdfdfd"/><stop offset="1" stop-color="#d9d9d9"/></linearGradient><linearGradient id="gFold" x1="0" y1="0" x2="0" y2="1"><stop offset="0" stop-color="#f6dc80"/><stop offset="1" stop-color="#dcb23c"/></linearGradient><linearGradient id="gTray" x1="0" y1="0" x2="0" y2="1"><stop offset="0" stop-color="#f4f4f4"/><stop offset="1" stop-color="#cfcfcf"/></linearGradient><linearGradient id="gArr" x1="0" y1="0" x2="0" y2="1"><stop offset="0" stop-color="#9ee06a"/><stop offset="1" stop-color="#3e9d2a"/></linearGradient><linearGradient id="gChk" x1="0" y1="0" x2="0" y2="1"><stop offset="0" stop-color="#a8de70"/><stop offset="1" stop-color="#58ac36"/></linearGradient><linearGradient id="gHelp" x1="0" y1="0" x2="0" y2="1"><stop offset="0" stop-color="#5590d0"/><stop offset="1" stop-color="#2a5c9c"/></linearGradient><linearGradient id="gMon" x1="0" y1="0" x2="0" y2="1"><stop offset="0" stop-color="#e8e8e8"/><stop offset="1" stop-color="#b8b8b8"/></linearGradient><radialGradient id="gLens" cx="0.4" cy="0.35" r="0.7"><stop offset="0" stop-color="#ffffff"/><stop offset="1" stop-color="#d8d8e0"/></radialGradient></defs><rect x="5.5" y="53.5" width="25" height="26.5" rx="1.5" fill="url(#gDoc)" stroke="#a8a8a8"/><circle cx="25.8" cy="74.8" r="6" fill="#5cb84a" stroke="#3f8f30" stroke-width="1"/><path d="M25.8 71V78.6M22 74.8H29.6" stroke="#fff" stroke-width="2.4"/><path d="M40.5 66V57.5H52L53.5 59H68V66Z" fill="#f0f0f0" stroke="#a8a8a8"/><rect x="39.5" y="65" width="29" height="14.5" rx="1" fill="url(#gFold)" stroke="#c29d35"/><path d="M40.5 66.5H67.5" stroke="#fbe9a8" stroke-width="1"/><rect x="76.5" y="54.5" width="27.5" height="25" rx="1.5" fill="url(#gTray)" stroke="#8a8a8a"/><rect x="76.5" y="75" width="27.5" height="4.5" rx="1" fill="#3a3a3a"/><path d="M81 66Q90.3 77 99.5 66" fill="none" stroke="#9a9a9a" stroke-width="1"/><path d="M85.5 51H94.5V60H98.8L90 69.8L81.2 60H85.5Z" fill="url(#gArr)" stroke="#4a9a32" stroke-width="0.6"/><ellipse cx="131" cy="78.5" rx="9" ry="2.5" fill="#000" opacity="0.08"/><circle cx="129.2" cy="63.3" r="9.6" fill="url(#gLens)" stroke="#5254c0" stroke-width="2.8"/><circle cx="129.2" cy="63.3" r="11" fill="none" stroke="#262a78" stroke-width="0.9"/><path d="M137.4 71.4L145.2 79" stroke="#3a3226" stroke-width="4.2" stroke-linecap="round"/><circle cx="165.3" cy="63.3" r="9.6" fill="url(#gLens)" stroke="#5254c0" stroke-width="2.8"/><circle cx="165.3" cy="63.3" r="11" fill="none" stroke="#262a78" stroke-width="0.9"/><path d="M173.5 71.4L181.3 79" stroke="#3a3226" stroke-width="4.2" stroke-linecap="round"/><path d="M159.5 78.5L179.5 58.5" stroke="#b8741c" stroke-width="3.8"/><path d="M159.5 78.5L179.5 58.5" stroke="#f3a83a" stroke-width="2.6"/><path d="M178.5 59.5L181 57" stroke="#e23a2a" stroke-width="3.6" stroke-linecap="round"/><path d="M158.2 79.8L160.8 77.2" stroke="#222" stroke-width="2"/><rect x="195.5" y="55.2" width="29" height="24.3" rx="1.5" fill="#ececec" stroke="#a0a0a0"/><path d="M196.2 55.2h4.7l2.7 3.6h-4.7Z" fill="#c83030"/><path d="M202.8 55.2h4.7l2.7 3.6h-4.7Z" fill="#30a838"/><path d="M209.9 55.2h4.7l2.7 3.6h-4.7Z" fill="#2f5ccc"/><path d="M217 55.2h5.5l1.5 2v1.6h-4.3Z" fill="#777"/><path d="M199.2 59.6h4.3l-2.8 4h-4.3Z M205.5 59.6h4.3l-2.8 4h-4.3Z M212 59.6h4.3l-2.8 4h-4.3Z" fill="#4a4a4a"/><path d="M196.5 70.3H209M196.5 73.7H209M196.5 76.8H209" stroke="#c4c4c4" stroke-width="1.6" stroke-dasharray="2 1.1"/><defs><linearGradient id="gClk" x1="0" y1="0" x2="0" y2="1"><stop offset="0" stop-color="#6a6a6a"/><stop offset="1" stop-color="#262626"/></linearGradient></defs><circle cx="216.3" cy="71.65" r="8.3" fill="url(#gClk)" stroke="#1e1e1e" stroke-width="0.6"/><path d="M219.6 68.4h-4.9v3.1h3.3q1.6 0 1.6 1.6v0.6q0 1.6-1.6 1.6h-3.6" fill="none" stroke="#fff" stroke-width="1.9"/><path d="M216.3 63V71.65H225.5" fill="none" stroke="#111" stroke-width="0.8"/><path d="M237 68L244.8 75.6L255 57" fill="none" stroke="#55a535" stroke-width="6.2" stroke-linejoin="round" stroke-linecap="round"/><path d="M237 68L244.8 75.6L255 57" fill="none" stroke="url(#gChk)" stroke-width="4.6" stroke-linejoin="round" stroke-linecap="round"/><circle cx="288" cy="66" r="13.9" fill="url(#gHelp)" stroke="#24508a" stroke-width="0.8"/><path d="M283.5 61.3Q283.5 57 288.3 57Q293.2 57 293.2 61Q293.2 63.5 290.5 65Q288.6 66.2 288.6 69.5" fill="none" stroke="#fff" stroke-width="3"/><circle cx="288.6" cy="74.3" r="1.9" fill="#fff"/><rect x="314.5" y="53.5" width="31" height="26.5" rx="2.5" fill="url(#gMon)" stroke="#9a9a9a"/><rect x="317" y="56" width="26" height="19.7" fill="#161a16"/><path d="M319.5 56V75.7M322.5 56V75.7M325.5 56V75.7M328.5 56V75.7M331.5 56V75.7M334.5 56V75.7M337.5 56V75.7M340.5 56V75.7M317 59.5H343M317 63.5H343M317 67.5H343M317 71.5H343" stroke="#2c3a2c" stroke-width="0.6"/><path d="M317.5 66.3H321.1L323.3 60.7L326.4 71L329.25 65.4L331.1 68.5L333.3 65L335.5 68.2L337.4 66.3H342" fill="none" stroke="#b4f050" stroke-width="1.3"/><rect x="351" y="55" width="30" height="25" rx="1.5" fill="#1e1e1e"/><path d="M356 55.6h3l2 3h-3Z M362.5 55.6h3l2 3h-3Z M369 55.6h3l2 3h-3Z M375.5 55.6h3l2 3h-3Z" fill="#f4f4f4"/><path d="M356 62.8h3l2-3h-3Z M362.5 62.8h3l2-3h-3Z M369 62.8h3l2-3h-3Z M375.5 62.8h3l2-3h-3Z" fill="#f4f4f4"/><path d="M352.5 56.5V58M352.5 60V62" stroke="#ddd" stroke-width="1"/><path d="M353 66.5H379M353 69.5H379M353 75H379M361.5 73.5V77M370.5 73.5V77" stroke="#d8d8d8" stroke-width="0.9"/></svg>
<svg style="left:690px;top:380px" width="590" height="50" viewBox="690 380 590 50"><defs><linearGradient id="gPlay" x1="0" y1="0" x2="0" y2="1"><stop offset="0" stop-color="#d0dcf8"/><stop offset="0.45" stop-color="#6080e0"/><stop offset="0.5" stop-color="#0a34d0"/><stop offset="1" stop-color="#30b4ff"/></linearGradient><linearGradient id="gStop" x1="0" y1="0" x2="0" y2="1"><stop offset="0" stop-color="#f4f4f4"/><stop offset="1" stop-color="#c8c8c8"/></linearGradient></defs><circle cx="730" cy="411.5" r="13.2" fill="#1c2230" stroke="#4a5060" stroke-width="0.8"/><circle cx="730" cy="411.5" r="11.2" fill="url(#gPlay)"/><path d="M726.3 405.6L737.4 411.4L726.3 417.6Z" fill="#f0f0f0"/><rect x="751" y="407" width="9" height="9" rx="1" fill="url(#gStop)"/><path d="M770 409.5H773L777 406V417L773 413.5H770Z" fill="#e8e8e8"/><path d="M778.5 408.5Q780.5 411.6 778.5 414.6M780.8 407Q783.8 411.6 780.8 416.2M783 405.8Q786.8 411.6 783 417.4" fill="none" stroke="#e0e0e0" stroke-width="1.1"/><rect x="794" y="407" width="9.5" height="9.5" fill="#f4f4f4"/><path d="M796 408.4H802V414Z" fill="#000"/><path d="M795.4 414.8L799.5 410.7" stroke="#000" stroke-width="2"/><path d="M729 388.5V393.5L725 391Z M733.5 388.5V393.5L729.5 391Z" fill="#8c919c"/><path d="M1235 388.5V393.5L1239 391Z M1239.5 388.5V393.5L1243.5 391Z" fill="#8c919c"/></svg>
<svg style="left:230px;top:700px" width="200" height="28" viewBox="230 700 200 28"><defs><radialGradient id="gL2" cx="0.4" cy="0.35" r="0.7"><stop offset="0" stop-color="#ffffff"/><stop offset="1" stop-color="#b8cbe0"/></radialGradient><linearGradient id="gPl2" x1="0" y1="0" x2="0" y2="1"><stop offset="0" stop-color="#5a9af0"/><stop offset="1" stop-color="#1a5ad0"/></linearGradient><linearGradient id="gGr" x1="0" y1="0" x2="0" y2="1"><stop offset="0" stop-color="#a8d880"/><stop offset="1" stop-color="#4a9a30"/></linearGradient></defs><path d="M245.29999999999998 715.4L250.1 720.2" stroke="#6a5020" stroke-width="3" stroke-linecap="round"/><path d="M245.5 715.6L249.89999999999998 720" stroke="#e8b848" stroke-width="1.6" stroke-linecap="round"/><circle cx="241.7" cy="711.7" r="5.6" fill="url(#gL2)" stroke="#7a8494" stroke-width="1.2"/><path d="M238.7 711.7H244.7" stroke="#3c5a88" stroke-width="1.6"/><path d="M333.6 715.4L338.4 720.2" stroke="#6a5020" stroke-width="3" stroke-linecap="round"/><path d="M333.8 715.6L338.2 720" stroke="#e8b848" stroke-width="1.6" stroke-linecap="round"/><circle cx="330" cy="711.7" r="5.6" fill="url(#gL2)" stroke="#7a8494" stroke-width="1.2"/><path d="M327 711.7H333" stroke="#3c5a88" stroke-width="1.6"/><path d="M330 708.7V714.7" stroke="#3c5a88" stroke-width="1.6"/><path d="M309 712.5H314.5L311.75 715.5Z M417.5 712.5H423L420.25 715.5Z" fill="#000"/><path d="M356 707V718.2L362.6 712.6Z" fill="url(#gPl2)"/><rect x="374.25" y="705.25" width="15.5" height="15.5" fill="#ffffff" stroke="#4070b8" stroke-width="1"/><rect x="379.5" y="705.5" width="5" height="15" fill="#7aa6e8"/><path d="M379.5 705.5V720.5M384.5 705.5V720.5M374.5 710.5H379.5M374.5 715.5H379.5M384.5 710.5H389.5M384.5 715.5H389.5" stroke="#6088c8" stroke-width="0.8"/><path d="M396 710.5H400V708L404.5 713L400 718V715.5H396Z" fill="url(#gGr)" stroke="#3d7a28" stroke-width="0.6"/><path d="M403 710.5H407V708L411.8 713L407 718V715.5H403Z" fill="url(#gGr)" stroke="#3d7a28" stroke-width="0.6"/></svg>
</body></html>
